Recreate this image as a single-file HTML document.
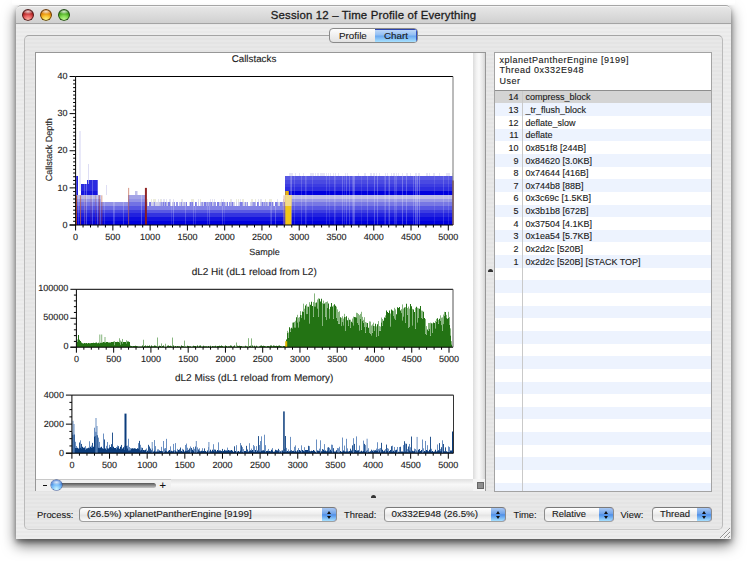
<!DOCTYPE html>
<html><head><meta charset="utf-8">
<style>
html,body{margin:0;padding:0;}
body{width:747px;height:564px;overflow:hidden;background:#fff;position:relative;font-family:"Liberation Sans", sans-serif;color:#1a1a1a;-webkit-text-stroke:0.12px currentColor;}
svg text{stroke:#222;stroke-width:0.12px;}
.abs{position:absolute;}
#win{left:16px;top:5px;width:715px;height:534px;background:repeating-linear-gradient(#ededed 0 2px,#e9e9e9 2px 4px);border-radius:5px 5px 0 0;box-shadow:0 6px 14px rgba(0,0,0,0.58),0 3px 5px rgba(0,0,0,0.35);overflow:hidden;}
#tb{left:0;top:0;width:715px;height:17px;background:linear-gradient(#e8e8e8,#d0d0d0);border-top:1px solid #a6a6a6;border-bottom:1px solid #a4a4a4;box-shadow:inset 0 1px 0 #f4f4f4;border-radius:5px 5px 0 0;}
.light{width:12px;height:12px;border-radius:50%;top:4px;}
#title{left:0;width:715px;top:4px;text-align:center;font-size:11.4px;letter-spacing:0.17px;color:#1c1c1c;white-space:nowrap;-webkit-text-stroke:0.3px #1c1c1c;}
#grp{left:8px;top:30px;width:697px;height:493px;border:1px solid #bababa;border-top-color:#a4a4a4;border-bottom-color:#cacaca;border-radius:5px;background:repeating-linear-gradient(#e8e8e8 0 2px,#e4e4e4 2px 4px);}
#seg{left:313px;top:23px;width:87px;height:13px;border:1px solid #8a8a8a;border-radius:4px;background:linear-gradient(#fdfdfd,#e2e2e2);overflow:hidden;}
#seg .on{position:absolute;left:45px;top:0;width:42px;height:13px;background:linear-gradient(#c6dbf8,#93c0f4 45%,#6ca9f0 55%,#a8e2ff);box-shadow:inset 0 1px 0 #2c44b0,inset -1px 0 0 #3050c0;}
#seg span{position:absolute;top:0px;font-size:9.8px;line-height:13px;}
#lp{left:19px;top:47px;width:450px;height:438px;border:1px solid #979797;background:#fff;}
#rp{left:478px;top:47px;width:216px;height:438px;border:1px solid #979797;background:#fff;overflow:hidden;}
.row{position:absolute;left:0;width:216px;}
.rt{position:absolute;font-size:9px;line-height:12.6px;white-space:nowrap;color:#1a1a1a;}
.num{left:0;width:23.5px;text-align:right;}
.nm{left:30.5px;}
.lbl{position:absolute;font-size:9.4px;top:507.5px;line-height:14px;white-space:nowrap;color:#1a1a1a;}
.pop{position:absolute;top:507px;height:15px;box-sizing:border-box;border:1px solid #8c8c8c;border-top-color:#7a7a7a;border-bottom-color:#a0a0a0;border-radius:4px;background:linear-gradient(#ffffff,#eeeeee 45%,#e4e4e4 55%,#fafafa);overflow:hidden;}
.pop .t{position:absolute;left:7px;top:-1px;font-size:9.9px;line-height:13px;white-space:nowrap;}
.pop .cap{position:absolute;right:-1px;top:-1px;width:15px;height:15px;box-sizing:border-box;border:1px solid #2a3aa8;border-left:none;border-radius:0 4px 4px 0;background:linear-gradient(#a9c8f2,#6fa3ea 45%,#4d8ee8 52%,#a6e0ff);}
.pop .cap:before{content:"";position:absolute;left:4.5px;top:2.5px;border-left:2.2px solid transparent;border-right:2.2px solid transparent;border-bottom:3px solid #111;}
.pop .cap:after{content:"";position:absolute;left:4.5px;top:7.5px;border-left:2.2px solid transparent;border-right:2.2px solid transparent;border-top:3px solid #111;}
</style></head><body>
<div id="win" class="abs">
  <div id="tb" class="abs"></div>
  <div id="grp" class="abs"></div>
</div>
<div class="abs" style="left:12px;top:0;width:723px;height:5px;background:linear-gradient(#fff 50%,#fafafa)"></div>
<div class="abs light" style="left:22px;top:9px;box-shadow:inset 0 0 0 1px rgba(50,25,25,0.85);background:radial-gradient(ellipse 50% 22% at 50% 22%,rgba(255,255,255,0.8),rgba(255,255,255,0) 100%),radial-gradient(circle at 50% 92%,#ffb8a8 0,#e86060 35%,#b02020 60%,#8a1010 80%)"></div>
<div class="abs light" style="left:40px;top:9px;box-shadow:inset 0 0 0 1px rgba(70,45,15,0.85);background:radial-gradient(ellipse 50% 22% at 50% 22%,rgba(255,255,255,0.8),rgba(255,255,255,0) 100%),radial-gradient(circle at 50% 92%,#ffff90 0,#f8c030 35%,#e08000 60%,#c06000 80%)"></div>
<div class="abs light" style="left:58px;top:9px;box-shadow:inset 0 0 0 1px rgba(25,50,20,0.85);background:radial-gradient(ellipse 50% 22% at 50% 22%,rgba(255,255,255,0.8),rgba(255,255,255,0) 100%),radial-gradient(circle at 50% 92%,#c8ff98 0,#80d850 35%,#40a018 60%,#2a7a10 80%)"></div>
<div id="title" class="abs" style="left:16px;top:9px;width:715px">Session 12 – Time Profile of Everything</div>
<div id="seg" class="abs" style="left:329px;top:28px"><div class="on"></div><span style="left:9px">Profile</span><span style="left:54px">Chart</span></div>
<div class="abs" style="left:35px;top:52px;width:451px;height:439px;border:1px solid #979797;background:#fff;box-sizing:border-box"></div>
<svg class="abs" style="left:36px;top:53px" width="437" height="426" viewBox="36 53 437 426" font-family='"Liberation Sans", sans-serif' shape-rendering="crispEdges">
<g text-rendering="geometricPrecision" shape-rendering="auto">
<rect x="76" y="221" width="377" height="4" fill="rgb(0,0,222)"/>
<rect x="76" y="217" width="2" height="4" fill="rgb(12,12,222)"/>
<rect x="78" y="217" width="20" height="4" fill="rgb(13,13,222)"/>
<rect x="98" y="217" width="3" height="4" fill="rgb(12,12,222)"/>
<rect x="101" y="217" width="27" height="4" fill="rgb(16,16,222)"/>
<rect x="128" y="217" width="18" height="4" fill="rgb(13,13,222)"/>
<rect x="146" y="217" width="138" height="4" fill="rgb(20,20,223)"/>
<rect x="284" y="217" width="1" height="4" fill="rgb(14,14,222)"/>
<rect x="285" y="217" width="168" height="4" fill="rgb(13,13,222)"/>
<rect x="76" y="213" width="2" height="4" fill="rgb(30,30,223)"/>
<rect x="78" y="213" width="20" height="4" fill="rgb(34,34,223)"/>
<rect x="98" y="213" width="3" height="4" fill="rgb(32,32,223)"/>
<rect x="101" y="213" width="27" height="4" fill="rgb(42,42,224)"/>
<rect x="128" y="213" width="18" height="4" fill="rgb(33,33,223)"/>
<rect x="146" y="213" width="138" height="4" fill="rgb(51,51,224)"/>
<rect x="284" y="213" width="1" height="4" fill="rgb(36,36,224)"/>
<rect x="285" y="213" width="168" height="4" fill="rgb(34,34,223)"/>
<rect x="76" y="210" width="2" height="3" fill="rgb(53,53,225)"/>
<rect x="78" y="210" width="20" height="3" fill="rgb(58,58,225)"/>
<rect x="98" y="210" width="3" height="3" fill="rgb(56,56,225)"/>
<rect x="101" y="210" width="27" height="3" fill="rgb(73,73,226)"/>
<rect x="128" y="210" width="18" height="3" fill="rgb(57,57,225)"/>
<rect x="146" y="210" width="138" height="3" fill="rgb(88,88,227)"/>
<rect x="284" y="210" width="1" height="3" fill="rgb(63,63,225)"/>
<rect x="285" y="210" width="168" height="3" fill="rgb(60,60,225)"/>
<rect x="76" y="206" width="2" height="4" fill="rgb(78,78,226)"/>
<rect x="78" y="206" width="20" height="4" fill="rgb(86,86,226)"/>
<rect x="98" y="206" width="3" height="4" fill="rgb(83,83,226)"/>
<rect x="101" y="206" width="27" height="4" fill="rgb(108,108,228)"/>
<rect x="128" y="206" width="18" height="4" fill="rgb(85,85,226)"/>
<rect x="146" y="206" width="138" height="4" fill="rgb(130,130,229)"/>
<rect x="284" y="206" width="1" height="4" fill="rgb(93,93,227)"/>
<rect x="285" y="206" width="168" height="4" fill="rgb(88,88,227)"/>
<rect x="76" y="202" width="2" height="4" fill="rgb(106,106,228)"/>
<rect x="78" y="202" width="20" height="4" fill="rgb(117,117,228)"/>
<rect x="98" y="202" width="3" height="4" fill="rgb(113,113,228)"/>
<rect x="101" y="202" width="27" height="4" fill="rgb(147,147,230)"/>
<rect x="128" y="202" width="18" height="4" fill="rgb(114,114,228)"/>
<rect x="146" y="202" width="1" height="4" fill="rgb(151,151,230)"/>
<rect x="147" y="202" width="1" height="4" fill="rgb(210,210,234)"/>
<rect x="149" y="202" width="2" height="4" fill="rgb(126,126,229)"/>
<rect x="151" y="202" width="2" height="4" fill="rgb(210,210,234)"/>
<rect x="153" y="202" width="1" height="4" fill="rgb(199,199,233)"/>
<rect x="154" y="202" width="1" height="4" fill="rgb(151,151,230)"/>
<rect x="155" y="202" width="4" height="4" fill="rgb(210,210,234)"/>
<rect x="159" y="202" width="1" height="4" fill="rgb(199,199,233)"/>
<rect x="160" y="202" width="1" height="4" fill="rgb(178,178,232)"/>
<rect x="161" y="202" width="1" height="4" fill="rgb(151,151,230)"/>
<rect x="162" y="202" width="1" height="4" fill="rgb(178,178,232)"/>
<rect x="163" y="202" width="1" height="4" fill="rgb(126,126,229)"/>
<rect x="164" y="202" width="1" height="4" fill="rgb(178,178,232)"/>
<rect x="165" y="202" width="1" height="4" fill="rgb(126,126,229)"/>
<rect x="166" y="202" width="1" height="4" fill="rgb(178,178,232)"/>
<rect x="167" y="202" width="1" height="4" fill="rgb(210,210,234)"/>
<rect x="168" y="202" width="2" height="4" fill="rgb(126,126,229)"/>
<rect x="170" y="202" width="1" height="4" fill="rgb(199,199,233)"/>
<rect x="172" y="202" width="2" height="4" fill="rgb(199,199,233)"/>
<rect x="174" y="202" width="1" height="4" fill="rgb(151,151,230)"/>
<rect x="176" y="202" width="2" height="4" fill="rgb(151,151,230)"/>
<rect x="179" y="202" width="2" height="4" fill="rgb(199,199,233)"/>
<rect x="181" y="202" width="1" height="4" fill="rgb(151,151,230)"/>
<rect x="182" y="202" width="1" height="4" fill="rgb(210,210,234)"/>
<rect x="183" y="202" width="1" height="4" fill="rgb(199,199,233)"/>
<rect x="184" y="202" width="1" height="4" fill="rgb(178,178,232)"/>
<rect x="185" y="202" width="1" height="4" fill="rgb(210,210,234)"/>
<rect x="186" y="202" width="1" height="4" fill="rgb(126,126,229)"/>
<rect x="189" y="202" width="1" height="4" fill="rgb(210,210,234)"/>
<rect x="190" y="202" width="1" height="4" fill="rgb(126,126,229)"/>
<rect x="191" y="202" width="1" height="4" fill="rgb(151,151,230)"/>
<rect x="192" y="202" width="1" height="4" fill="rgb(126,126,229)"/>
<rect x="193" y="202" width="1" height="4" fill="rgb(210,210,234)"/>
<rect x="195" y="202" width="1" height="4" fill="rgb(126,126,229)"/>
<rect x="196" y="202" width="1" height="4" fill="rgb(151,151,230)"/>
<rect x="198" y="202" width="1" height="4" fill="rgb(199,199,233)"/>
<rect x="200" y="202" width="1" height="4" fill="rgb(199,199,233)"/>
<rect x="201" y="202" width="1" height="4" fill="rgb(178,178,232)"/>
<rect x="202" y="202" width="1" height="4" fill="rgb(151,151,230)"/>
<rect x="203" y="202" width="1" height="4" fill="rgb(210,210,234)"/>
<rect x="204" y="202" width="2" height="4" fill="rgb(126,126,229)"/>
<rect x="206" y="202" width="1" height="4" fill="rgb(178,178,232)"/>
<rect x="207" y="202" width="1" height="4" fill="rgb(151,151,230)"/>
<rect x="208" y="202" width="1" height="4" fill="rgb(178,178,232)"/>
<rect x="209" y="202" width="2" height="4" fill="rgb(151,151,230)"/>
<rect x="211" y="202" width="1" height="4" fill="rgb(126,126,229)"/>
<rect x="212" y="202" width="1" height="4" fill="rgb(199,199,233)"/>
<rect x="213" y="202" width="1" height="4" fill="rgb(178,178,232)"/>
<rect x="214" y="202" width="2" height="4" fill="rgb(151,151,230)"/>
<rect x="217" y="202" width="2" height="4" fill="rgb(126,126,229)"/>
<rect x="219" y="202" width="2" height="4" fill="rgb(199,199,233)"/>
<rect x="221" y="202" width="1" height="4" fill="rgb(178,178,232)"/>
<rect x="222" y="202" width="1" height="4" fill="rgb(126,126,229)"/>
<rect x="223" y="202" width="2" height="4" fill="rgb(151,151,230)"/>
<rect x="225" y="202" width="1" height="4" fill="rgb(199,199,233)"/>
<rect x="226" y="202" width="1" height="4" fill="rgb(210,210,234)"/>
<rect x="227" y="202" width="1" height="4" fill="rgb(126,126,229)"/>
<rect x="229" y="202" width="1" height="4" fill="rgb(151,151,230)"/>
<rect x="230" y="202" width="2" height="4" fill="rgb(178,178,232)"/>
<rect x="232" y="202" width="1" height="4" fill="rgb(126,126,229)"/>
<rect x="233" y="202" width="1" height="4" fill="rgb(199,199,233)"/>
<rect x="234" y="202" width="1" height="4" fill="rgb(210,210,234)"/>
<rect x="236" y="202" width="1" height="4" fill="rgb(210,210,234)"/>
<rect x="238" y="202" width="1" height="4" fill="rgb(210,210,234)"/>
<rect x="239" y="202" width="1" height="4" fill="rgb(199,199,233)"/>
<rect x="240" y="202" width="2" height="4" fill="rgb(126,126,229)"/>
<rect x="242" y="202" width="1" height="4" fill="rgb(151,151,230)"/>
<rect x="243" y="202" width="2" height="4" fill="rgb(210,210,234)"/>
<rect x="245" y="202" width="1" height="4" fill="rgb(151,151,230)"/>
<rect x="246" y="202" width="1" height="4" fill="rgb(210,210,234)"/>
<rect x="247" y="202" width="1" height="4" fill="rgb(151,151,230)"/>
<rect x="250" y="202" width="1" height="4" fill="rgb(210,210,234)"/>
<rect x="251" y="202" width="1" height="4" fill="rgb(199,199,233)"/>
<rect x="252" y="202" width="1" height="4" fill="rgb(178,178,232)"/>
<rect x="253" y="202" width="2" height="4" fill="rgb(151,151,230)"/>
<rect x="255" y="202" width="1" height="4" fill="rgb(178,178,232)"/>
<rect x="257" y="202" width="1" height="4" fill="rgb(126,126,229)"/>
<rect x="258" y="202" width="1" height="4" fill="rgb(151,151,230)"/>
<rect x="260" y="202" width="1" height="4" fill="rgb(199,199,233)"/>
<rect x="261" y="202" width="1" height="4" fill="rgb(178,178,232)"/>
<rect x="262" y="202" width="1" height="4" fill="rgb(126,126,229)"/>
<rect x="263" y="202" width="1" height="4" fill="rgb(178,178,232)"/>
<rect x="264" y="202" width="1" height="4" fill="rgb(151,151,230)"/>
<rect x="265" y="202" width="1" height="4" fill="rgb(178,178,232)"/>
<rect x="266" y="202" width="1" height="4" fill="rgb(151,151,230)"/>
<rect x="267" y="202" width="1" height="4" fill="rgb(178,178,232)"/>
<rect x="268" y="202" width="1" height="4" fill="rgb(210,210,234)"/>
<rect x="269" y="202" width="2" height="4" fill="rgb(126,126,229)"/>
<rect x="271" y="202" width="1" height="4" fill="rgb(178,178,232)"/>
<rect x="272" y="202" width="1" height="4" fill="rgb(126,126,229)"/>
<rect x="273" y="202" width="1" height="4" fill="rgb(210,210,234)"/>
<rect x="275" y="202" width="2" height="4" fill="rgb(126,126,229)"/>
<rect x="277" y="202" width="1" height="4" fill="rgb(151,151,230)"/>
<rect x="278" y="202" width="2" height="4" fill="rgb(210,210,234)"/>
<rect x="280" y="202" width="2" height="4" fill="rgb(126,126,229)"/>
<rect x="282" y="202" width="1" height="4" fill="rgb(151,151,230)"/>
<rect x="283" y="202" width="1" height="4" fill="rgb(199,199,233)"/>
<rect x="284" y="202" width="1" height="4" fill="rgb(126,126,229)"/>
<rect x="285" y="202" width="168" height="4" fill="rgb(120,120,228)"/>
<rect x="76" y="199" width="2" height="3" fill="rgb(136,136,229)"/>
<rect x="78" y="199" width="20" height="3" fill="rgb(150,150,230)"/>
<rect x="98" y="199" width="3" height="3" fill="rgb(144,144,230)"/>
<rect x="128" y="199" width="18" height="3" fill="rgb(147,147,230)"/>
<rect x="147" y="199" width="1" height="3" fill="#ececdc"/>
<rect x="151" y="199" width="1" height="3" fill="#ececdc"/>
<rect x="153" y="199" width="3" height="3" fill="#ececdc"/>
<rect x="158" y="199" width="1" height="3" fill="#e4e4f2"/>
<rect x="160" y="199" width="1" height="3" fill="#ececdc"/>
<rect x="161" y="199" width="1" height="3" fill="#e4e4f2"/>
<rect x="163" y="199" width="2" height="3" fill="#e4e4f2"/>
<rect x="166" y="199" width="1" height="3" fill="#e4e4f2"/>
<rect x="169" y="199" width="2" height="3" fill="#e4e4f2"/>
<rect x="173" y="199" width="1" height="3" fill="#e4e4f2"/>
<rect x="181" y="199" width="1" height="3" fill="#ececdc"/>
<rect x="182" y="199" width="1" height="3" fill="#e4e4f2"/>
<rect x="191" y="199" width="3" height="3" fill="#ececdc"/>
<rect x="198" y="199" width="1" height="3" fill="#e4e4f2"/>
<rect x="200" y="199" width="1" height="3" fill="#ececdc"/>
<rect x="210" y="199" width="1" height="3" fill="#e4e4f2"/>
<rect x="212" y="199" width="1" height="3" fill="#e4e4f2"/>
<rect x="214" y="199" width="1" height="3" fill="#e4e4f2"/>
<rect x="221" y="199" width="1" height="3" fill="#e4e4f2"/>
<rect x="223" y="199" width="1" height="3" fill="#e4e4f2"/>
<rect x="230" y="199" width="1" height="3" fill="#ececdc"/>
<rect x="231" y="199" width="1" height="3" fill="#e4e4f2"/>
<rect x="236" y="199" width="1" height="3" fill="#ececdc"/>
<rect x="238" y="199" width="1" height="3" fill="#ececdc"/>
<rect x="240" y="199" width="1" height="3" fill="#e4e4f2"/>
<rect x="242" y="199" width="2" height="3" fill="#ececdc"/>
<rect x="251" y="199" width="2" height="3" fill="#ececdc"/>
<rect x="255" y="199" width="1" height="3" fill="#ececdc"/>
<rect x="258" y="199" width="1" height="3" fill="#e4e4f2"/>
<rect x="260" y="199" width="2" height="3" fill="#e4e4f2"/>
<rect x="265" y="199" width="1" height="3" fill="#ececdc"/>
<rect x="269" y="199" width="3" height="3" fill="#ececdc"/>
<rect x="277" y="199" width="1" height="3" fill="#e4e4f2"/>
<rect x="283" y="199" width="1" height="3" fill="#e4e4f2"/>
<rect x="285" y="199" width="168" height="3" fill="rgb(153,153,230)"/>
<rect x="76" y="195" width="2" height="4" fill="rgb(168,168,231)"/>
<rect x="78" y="195" width="20" height="4" fill="rgb(184,184,232)"/>
<rect x="98" y="195" width="3" height="4" fill="rgb(178,178,232)"/>
<rect x="128" y="195" width="18" height="4" fill="rgb(163,163,231)"/>
<rect x="285" y="195" width="168" height="4" fill="rgb(189,189,232)"/>
<rect x="76" y="191" width="2" height="4" fill="rgb(31,31,223)"/>
<rect x="81" y="191" width="17" height="4" fill="rgb(21,21,223)"/>
<rect x="285" y="191" width="168" height="4" fill="rgb(0,0,222)"/>
<rect x="76" y="187" width="2" height="4" fill="rgb(31,31,223)"/>
<rect x="81" y="187" width="17" height="4" fill="rgb(42,42,224)"/>
<rect x="285" y="187" width="168" height="4" fill="rgb(46,46,224)"/>
<rect x="76" y="184" width="2" height="3" fill="rgb(31,31,223)"/>
<rect x="81" y="184" width="17" height="3" fill="rgb(42,42,224)"/>
<rect x="285" y="184" width="168" height="3" fill="rgb(60,60,225)"/>
<rect x="76" y="180" width="2" height="4" fill="rgb(31,31,223)"/>
<rect x="87" y="180" width="11" height="4" fill="rgb(42,42,224)"/>
<rect x="285" y="180" width="168" height="4" fill="rgb(74,74,226)"/>
<rect x="76" y="176" width="2" height="4" fill="rgb(31,31,223)"/>
<rect x="285" y="176" width="168" height="4" fill="rgb(88,88,227)"/>
<rect x="289" y="173" width="4" height="3" fill="#e6e6f6"/>
<rect x="295" y="173" width="1" height="3" fill="#e6e6f6"/>
<rect x="299" y="173" width="1" height="3" fill="#e6e6f6"/>
<rect x="303" y="173" width="1" height="3" fill="#e6e6f6"/>
<rect x="310" y="173" width="4" height="3" fill="#e6e6f6"/>
<rect x="315" y="173" width="1" height="3" fill="#e6e6f6"/>
<rect x="317" y="173" width="2" height="3" fill="#e6e6f6"/>
<rect x="320" y="173" width="5" height="3" fill="#e6e6f6"/>
<rect x="326" y="173" width="1" height="3" fill="#e6e6f6"/>
<rect x="328" y="173" width="1" height="3" fill="#e6e6f6"/>
<rect x="330" y="173" width="1" height="3" fill="#e6e6f6"/>
<rect x="333" y="173" width="1" height="3" fill="#e6e6f6"/>
<rect x="335" y="173" width="1" height="3" fill="#e6e6f6"/>
<rect x="338" y="173" width="1" height="3" fill="#e6e6f6"/>
<rect x="345" y="173" width="1" height="3" fill="#e6e6f6"/>
<rect x="347" y="173" width="1" height="3" fill="#e6e6f6"/>
<rect x="358" y="173" width="1" height="3" fill="#e6e6f6"/>
<rect x="364" y="173" width="2" height="3" fill="#e6e6f6"/>
<rect x="370" y="173" width="2" height="3" fill="#e6e6f6"/>
<rect x="373" y="173" width="2" height="3" fill="#e6e6f6"/>
<rect x="376" y="173" width="1" height="3" fill="#e6e6f6"/>
<rect x="379" y="173" width="1" height="3" fill="#e6e6f6"/>
<rect x="385" y="173" width="1" height="3" fill="#e6e6f6"/>
<rect x="387" y="173" width="1" height="3" fill="#e6e6f6"/>
<rect x="391" y="173" width="1" height="3" fill="#e6e6f6"/>
<rect x="393" y="173" width="2" height="3" fill="#e6e6f6"/>
<rect x="396" y="173" width="1" height="3" fill="#e6e6f6"/>
<rect x="398" y="173" width="1" height="3" fill="#e6e6f6"/>
<rect x="402" y="173" width="1" height="3" fill="#e6e6f6"/>
<rect x="406" y="173" width="2" height="3" fill="#e6e6f6"/>
<rect x="410" y="173" width="1" height="3" fill="#e6e6f6"/>
<rect x="415" y="173" width="2" height="3" fill="#e6e6f6"/>
<rect x="418" y="173" width="2" height="3" fill="#e6e6f6"/>
<rect x="426" y="173" width="2" height="3" fill="#e6e6f6"/>
<rect x="429" y="173" width="1" height="3" fill="#e6e6f6"/>
<rect x="433" y="173" width="2" height="3" fill="#e6e6f6"/>
<rect x="439" y="173" width="1" height="3" fill="#e6e6f6"/>
<rect x="446" y="173" width="4" height="3" fill="#e6e6f6"/>
<rect x="452" y="173" width="1" height="3" fill="#e6e6f6"/>
<rect x="76" y="176" width="1" height="49" fill="#ffffff" fill-opacity="0.23"/>
<rect x="78" y="195" width="1" height="30" fill="#ffffff" fill-opacity="0.17"/>
<rect x="80" y="195" width="1" height="30" fill="#ffffff" fill-opacity="0.27"/>
<rect x="84" y="184" width="1" height="41" fill="#ffffff" fill-opacity="0.22"/>
<rect x="86" y="184" width="1" height="41" fill="#ffffff" fill-opacity="0.27"/>
<rect x="92" y="180" width="1" height="45" fill="#ffffff" fill-opacity="0.24"/>
<rect x="97" y="180" width="1" height="45" fill="#ffffff" fill-opacity="0.27"/>
<rect x="100" y="195" width="1" height="30" fill="#ffffff" fill-opacity="0.26"/>
<rect x="104" y="202" width="1" height="23" fill="#ffffff" fill-opacity="0.17"/>
<rect x="113" y="202" width="1" height="23" fill="#ffffff" fill-opacity="0.22"/>
<rect x="114" y="202" width="1" height="23" fill="#ffffff" fill-opacity="0.19"/>
<rect x="123" y="202" width="1" height="23" fill="#ffffff" fill-opacity="0.2"/>
<rect x="128" y="195" width="1" height="30" fill="#ffffff" fill-opacity="0.26"/>
<rect x="141" y="195" width="1" height="30" fill="#ffffff" fill-opacity="0.26"/>
<rect x="171" y="206" width="1" height="19" fill="#ffffff" fill-opacity="0.12"/>
<rect x="173" y="206" width="1" height="19" fill="#ffffff" fill-opacity="0.23"/>
<rect x="185" y="206" width="1" height="19" fill="#ffffff" fill-opacity="0.2"/>
<rect x="193" y="206" width="1" height="19" fill="#ffffff" fill-opacity="0.17"/>
<rect x="195" y="206" width="1" height="19" fill="#ffffff" fill-opacity="0.13"/>
<rect x="207" y="206" width="1" height="19" fill="#ffffff" fill-opacity="0.15"/>
<rect x="209" y="206" width="1" height="19" fill="#ffffff" fill-opacity="0.19"/>
<rect x="222" y="206" width="1" height="19" fill="#ffffff" fill-opacity="0.21"/>
<rect x="224" y="206" width="1" height="19" fill="#ffffff" fill-opacity="0.1"/>
<rect x="270" y="206" width="1" height="19" fill="#ffffff" fill-opacity="0.14"/>
<rect x="271" y="206" width="1" height="19" fill="#ffffff" fill-opacity="0.21"/>
<rect x="275" y="206" width="1" height="19" fill="#ffffff" fill-opacity="0.23"/>
<rect x="283" y="206" width="1" height="19" fill="#ffffff" fill-opacity="0.25"/>
<rect x="284" y="202" width="1" height="23" fill="#ffffff" fill-opacity="0.23"/>
<rect x="290" y="176" width="1" height="49" fill="#ffffff" fill-opacity="0.19"/>
<rect x="291" y="176" width="1" height="49" fill="#ffffff" fill-opacity="0.27"/>
<rect x="294" y="176" width="1" height="49" fill="#ffffff" fill-opacity="0.14"/>
<rect x="301" y="176" width="1" height="49" fill="#ffffff" fill-opacity="0.17"/>
<rect x="305" y="176" width="1" height="49" fill="#ffffff" fill-opacity="0.18"/>
<rect x="306" y="176" width="1" height="49" fill="#ffffff" fill-opacity="0.11"/>
<rect x="312" y="176" width="1" height="49" fill="#ffffff" fill-opacity="0.12"/>
<rect x="326" y="176" width="1" height="49" fill="#ffffff" fill-opacity="0.14"/>
<rect x="329" y="176" width="1" height="49" fill="#ffffff" fill-opacity="0.11"/>
<rect x="334" y="176" width="1" height="49" fill="#ffffff" fill-opacity="0.18"/>
<rect x="335" y="176" width="1" height="49" fill="#ffffff" fill-opacity="0.1"/>
<rect x="342" y="176" width="1" height="49" fill="#ffffff" fill-opacity="0.21"/>
<rect x="344" y="176" width="1" height="49" fill="#ffffff" fill-opacity="0.11"/>
<rect x="346" y="176" width="1" height="49" fill="#ffffff" fill-opacity="0.21"/>
<rect x="349" y="176" width="1" height="49" fill="#ffffff" fill-opacity="0.21"/>
<rect x="352" y="176" width="1" height="49" fill="#ffffff" fill-opacity="0.16"/>
<rect x="353" y="176" width="1" height="49" fill="#ffffff" fill-opacity="0.28"/>
<rect x="354" y="176" width="1" height="49" fill="#ffffff" fill-opacity="0.23"/>
<rect x="361" y="176" width="1" height="49" fill="#ffffff" fill-opacity="0.11"/>
<rect x="367" y="176" width="1" height="49" fill="#ffffff" fill-opacity="0.2"/>
<rect x="374" y="176" width="1" height="49" fill="#ffffff" fill-opacity="0.23"/>
<rect x="377" y="176" width="1" height="49" fill="#ffffff" fill-opacity="0.24"/>
<rect x="384" y="176" width="1" height="49" fill="#ffffff" fill-opacity="0.12"/>
<rect x="385" y="176" width="1" height="49" fill="#ffffff" fill-opacity="0.2"/>
<rect x="388" y="176" width="1" height="49" fill="#ffffff" fill-opacity="0.11"/>
<rect x="389" y="176" width="1" height="49" fill="#ffffff" fill-opacity="0.25"/>
<rect x="394" y="176" width="1" height="49" fill="#ffffff" fill-opacity="0.16"/>
<rect x="395" y="176" width="1" height="49" fill="#ffffff" fill-opacity="0.13"/>
<rect x="396" y="176" width="1" height="49" fill="#ffffff" fill-opacity="0.17"/>
<rect x="402" y="176" width="1" height="49" fill="#ffffff" fill-opacity="0.26"/>
<rect x="406" y="176" width="1" height="49" fill="#ffffff" fill-opacity="0.23"/>
<rect x="413" y="176" width="1" height="49" fill="#ffffff" fill-opacity="0.19"/>
<rect x="415" y="176" width="1" height="49" fill="#ffffff" fill-opacity="0.27"/>
<rect x="416" y="176" width="1" height="49" fill="#ffffff" fill-opacity="0.16"/>
<rect x="417" y="176" width="1" height="49" fill="#ffffff" fill-opacity="0.27"/>
<rect x="419" y="176" width="1" height="49" fill="#ffffff" fill-opacity="0.26"/>
<rect x="434" y="176" width="1" height="49" fill="#ffffff" fill-opacity="0.1"/>
<rect x="443" y="176" width="1" height="49" fill="#ffffff" fill-opacity="0.16"/>
<rect x="448" y="176" width="1" height="49" fill="#ffffff" fill-opacity="0.12"/>
<rect x="452" y="176" width="1" height="49" fill="#ffffff" fill-opacity="0.24"/>
<rect x="79.5" y="131" width="1" height="60" fill="#c8c8f0" fill-opacity="0.8"/>
<rect x="135" y="191" width="2.5" height="4" fill="#c0c0ea"/>
<rect x="88" y="164" width="1" height="20" fill="#d0d0f0" fill-opacity="0.7"/>
<rect x="106" y="185" width="1" height="10" fill="#d0d0f0" fill-opacity="0.7"/>
<rect x="285.21" y="195" width="6.19" height="30" fill="#f2c518"/>
<rect x="285.21" y="195" width="6.19" height="11" fill="#f3dd98" fill-opacity="0.9"/>
<rect x="285.21" y="191" width="3.58" height="4" fill="#e8b010"/>
<rect x="75.97" y="195.3" width="1" height="29.7" fill="#b04020" fill-opacity="0.9"/>
<rect x="80.07" y="195.3" width="1" height="29.7" fill="#b04020" fill-opacity="0.6"/>
<rect x="84.54" y="195.3" width="1" height="29.7" fill="#b04020" fill-opacity="0.25"/>
<rect x="90.51" y="195.3" width="1" height="29.7" fill="#b04020" fill-opacity="0.25"/>
<rect x="94.98" y="195.3" width="1" height="29.7" fill="#b04020" fill-opacity="0.2"/>
<rect x="98.71" y="195.3" width="1" height="29.7" fill="#b04020" fill-opacity="0.6"/>
<rect x="101.32" y="195.3" width="1" height="29.7" fill="#b04020" fill-opacity="0.5"/>
<rect x="128.15" y="187.88" width="1" height="37.12" fill="#b04020" fill-opacity="0.55"/>
<rect x="283.57" y="195.3" width="1" height="29.7" fill="#b04020" fill-opacity="0.45"/>
<rect x="144.92" y="187.88" width="2" height="37.12" fill="#8b1a1a" fill-opacity="0.95"/>
<rect x="452.4" y="180.45" width="1.3" height="44.55" fill="#6a1010" fill-opacity="0.9"/>
<line x1="75.6" y1="76.5" x2="453" y2="76.5" stroke="#000" stroke-width="1"/>
<line x1="75.6" y1="76.5" x2="75.6" y2="225" stroke="#000" stroke-width="1"/>
<line x1="453" y1="76.5" x2="453" y2="225" stroke="#777" stroke-width="1"/>
<line x1="69.6" y1="225" x2="453" y2="225" stroke="#000" stroke-width="1"/>
<line x1="69.6" y1="225" x2="75.6" y2="225" stroke="#000" stroke-width="1"/>
<text x="67.6" y="227.7" font-size="9" text-anchor="end" fill="#222">0</text>
<line x1="73.1" y1="221.29" x2="75.6" y2="221.29" stroke="#000" stroke-width="1"/>
<line x1="73.1" y1="217.57" x2="75.6" y2="217.57" stroke="#000" stroke-width="1"/>
<line x1="73.1" y1="213.86" x2="75.6" y2="213.86" stroke="#000" stroke-width="1"/>
<line x1="73.1" y1="210.15" x2="75.6" y2="210.15" stroke="#000" stroke-width="1"/>
<line x1="73.1" y1="206.44" x2="75.6" y2="206.44" stroke="#000" stroke-width="1"/>
<line x1="73.1" y1="202.72" x2="75.6" y2="202.72" stroke="#000" stroke-width="1"/>
<line x1="73.1" y1="199.01" x2="75.6" y2="199.01" stroke="#000" stroke-width="1"/>
<line x1="73.1" y1="195.3" x2="75.6" y2="195.3" stroke="#000" stroke-width="1"/>
<line x1="73.1" y1="191.59" x2="75.6" y2="191.59" stroke="#000" stroke-width="1"/>
<line x1="69.6" y1="187.88" x2="75.6" y2="187.88" stroke="#000" stroke-width="1"/>
<text x="67.6" y="190.57" font-size="9" text-anchor="end" fill="#222">10</text>
<line x1="73.1" y1="184.16" x2="75.6" y2="184.16" stroke="#000" stroke-width="1"/>
<line x1="73.1" y1="180.45" x2="75.6" y2="180.45" stroke="#000" stroke-width="1"/>
<line x1="73.1" y1="176.74" x2="75.6" y2="176.74" stroke="#000" stroke-width="1"/>
<line x1="73.1" y1="173.03" x2="75.6" y2="173.03" stroke="#000" stroke-width="1"/>
<line x1="73.1" y1="169.31" x2="75.6" y2="169.31" stroke="#000" stroke-width="1"/>
<line x1="73.1" y1="165.6" x2="75.6" y2="165.6" stroke="#000" stroke-width="1"/>
<line x1="73.1" y1="161.89" x2="75.6" y2="161.89" stroke="#000" stroke-width="1"/>
<line x1="73.1" y1="158.18" x2="75.6" y2="158.18" stroke="#000" stroke-width="1"/>
<line x1="73.1" y1="154.46" x2="75.6" y2="154.46" stroke="#000" stroke-width="1"/>
<line x1="69.6" y1="150.75" x2="75.6" y2="150.75" stroke="#000" stroke-width="1"/>
<text x="67.6" y="153.45" font-size="9" text-anchor="end" fill="#222">20</text>
<line x1="73.1" y1="147.04" x2="75.6" y2="147.04" stroke="#000" stroke-width="1"/>
<line x1="73.1" y1="143.32" x2="75.6" y2="143.32" stroke="#000" stroke-width="1"/>
<line x1="73.1" y1="139.61" x2="75.6" y2="139.61" stroke="#000" stroke-width="1"/>
<line x1="73.1" y1="135.9" x2="75.6" y2="135.9" stroke="#000" stroke-width="1"/>
<line x1="73.1" y1="132.19" x2="75.6" y2="132.19" stroke="#000" stroke-width="1"/>
<line x1="73.1" y1="128.48" x2="75.6" y2="128.48" stroke="#000" stroke-width="1"/>
<line x1="73.1" y1="124.76" x2="75.6" y2="124.76" stroke="#000" stroke-width="1"/>
<line x1="73.1" y1="121.05" x2="75.6" y2="121.05" stroke="#000" stroke-width="1"/>
<line x1="73.1" y1="117.34" x2="75.6" y2="117.34" stroke="#000" stroke-width="1"/>
<line x1="69.6" y1="113.62" x2="75.6" y2="113.62" stroke="#000" stroke-width="1"/>
<text x="67.6" y="116.33" font-size="9" text-anchor="end" fill="#222">30</text>
<line x1="73.1" y1="109.91" x2="75.6" y2="109.91" stroke="#000" stroke-width="1"/>
<line x1="73.1" y1="106.2" x2="75.6" y2="106.2" stroke="#000" stroke-width="1"/>
<line x1="73.1" y1="102.49" x2="75.6" y2="102.49" stroke="#000" stroke-width="1"/>
<line x1="73.1" y1="98.78" x2="75.6" y2="98.78" stroke="#000" stroke-width="1"/>
<line x1="73.1" y1="95.06" x2="75.6" y2="95.06" stroke="#000" stroke-width="1"/>
<line x1="73.1" y1="91.35" x2="75.6" y2="91.35" stroke="#000" stroke-width="1"/>
<line x1="73.1" y1="87.64" x2="75.6" y2="87.64" stroke="#000" stroke-width="1"/>
<line x1="73.1" y1="83.93" x2="75.6" y2="83.93" stroke="#000" stroke-width="1"/>
<line x1="73.1" y1="80.21" x2="75.6" y2="80.21" stroke="#000" stroke-width="1"/>
<line x1="69.6" y1="76.5" x2="75.6" y2="76.5" stroke="#000" stroke-width="1"/>
<text x="67.6" y="79.2" font-size="9" text-anchor="end" fill="#222">40</text>
<line x1="75.6" y1="225" x2="75.6" y2="230.5" stroke="#000" stroke-width="1"/>
<text x="75.6" y="239.5" font-size="9" text-anchor="middle" fill="#222">0</text>
<line x1="83.05" y1="225" x2="83.05" y2="227.5" stroke="#000" stroke-width="1"/>
<line x1="90.51" y1="225" x2="90.51" y2="227.5" stroke="#000" stroke-width="1"/>
<line x1="97.96" y1="225" x2="97.96" y2="227.5" stroke="#000" stroke-width="1"/>
<line x1="105.42" y1="225" x2="105.42" y2="227.5" stroke="#000" stroke-width="1"/>
<line x1="112.87" y1="225" x2="112.87" y2="230.5" stroke="#000" stroke-width="1"/>
<text x="112.87" y="239.5" font-size="9" text-anchor="middle" fill="#222">500</text>
<line x1="120.32" y1="225" x2="120.32" y2="227.5" stroke="#000" stroke-width="1"/>
<line x1="127.78" y1="225" x2="127.78" y2="227.5" stroke="#000" stroke-width="1"/>
<line x1="135.23" y1="225" x2="135.23" y2="227.5" stroke="#000" stroke-width="1"/>
<line x1="142.69" y1="225" x2="142.69" y2="227.5" stroke="#000" stroke-width="1"/>
<line x1="150.14" y1="225" x2="150.14" y2="230.5" stroke="#000" stroke-width="1"/>
<text x="150.14" y="239.5" font-size="9" text-anchor="middle" fill="#222">1000</text>
<line x1="157.59" y1="225" x2="157.59" y2="227.5" stroke="#000" stroke-width="1"/>
<line x1="165.05" y1="225" x2="165.05" y2="227.5" stroke="#000" stroke-width="1"/>
<line x1="172.5" y1="225" x2="172.5" y2="227.5" stroke="#000" stroke-width="1"/>
<line x1="179.96" y1="225" x2="179.96" y2="227.5" stroke="#000" stroke-width="1"/>
<line x1="187.41" y1="225" x2="187.41" y2="230.5" stroke="#000" stroke-width="1"/>
<text x="187.41" y="239.5" font-size="9" text-anchor="middle" fill="#222">1500</text>
<line x1="194.86" y1="225" x2="194.86" y2="227.5" stroke="#000" stroke-width="1"/>
<line x1="202.32" y1="225" x2="202.32" y2="227.5" stroke="#000" stroke-width="1"/>
<line x1="209.77" y1="225" x2="209.77" y2="227.5" stroke="#000" stroke-width="1"/>
<line x1="217.23" y1="225" x2="217.23" y2="227.5" stroke="#000" stroke-width="1"/>
<line x1="224.68" y1="225" x2="224.68" y2="230.5" stroke="#000" stroke-width="1"/>
<text x="224.68" y="239.5" font-size="9" text-anchor="middle" fill="#222">2000</text>
<line x1="232.13" y1="225" x2="232.13" y2="227.5" stroke="#000" stroke-width="1"/>
<line x1="239.59" y1="225" x2="239.59" y2="227.5" stroke="#000" stroke-width="1"/>
<line x1="247.04" y1="225" x2="247.04" y2="227.5" stroke="#000" stroke-width="1"/>
<line x1="254.5" y1="225" x2="254.5" y2="227.5" stroke="#000" stroke-width="1"/>
<line x1="261.95" y1="225" x2="261.95" y2="230.5" stroke="#000" stroke-width="1"/>
<text x="261.95" y="239.5" font-size="9" text-anchor="middle" fill="#222">2500</text>
<line x1="269.4" y1="225" x2="269.4" y2="227.5" stroke="#000" stroke-width="1"/>
<line x1="276.86" y1="225" x2="276.86" y2="227.5" stroke="#000" stroke-width="1"/>
<line x1="284.31" y1="225" x2="284.31" y2="227.5" stroke="#000" stroke-width="1"/>
<line x1="291.77" y1="225" x2="291.77" y2="227.5" stroke="#000" stroke-width="1"/>
<line x1="299.22" y1="225" x2="299.22" y2="230.5" stroke="#000" stroke-width="1"/>
<text x="299.22" y="239.5" font-size="9" text-anchor="middle" fill="#222">3000</text>
<line x1="306.67" y1="225" x2="306.67" y2="227.5" stroke="#000" stroke-width="1"/>
<line x1="314.13" y1="225" x2="314.13" y2="227.5" stroke="#000" stroke-width="1"/>
<line x1="321.58" y1="225" x2="321.58" y2="227.5" stroke="#000" stroke-width="1"/>
<line x1="329.04" y1="225" x2="329.04" y2="227.5" stroke="#000" stroke-width="1"/>
<line x1="336.49" y1="225" x2="336.49" y2="230.5" stroke="#000" stroke-width="1"/>
<text x="336.49" y="239.5" font-size="9" text-anchor="middle" fill="#222">3500</text>
<line x1="343.94" y1="225" x2="343.94" y2="227.5" stroke="#000" stroke-width="1"/>
<line x1="351.4" y1="225" x2="351.4" y2="227.5" stroke="#000" stroke-width="1"/>
<line x1="358.85" y1="225" x2="358.85" y2="227.5" stroke="#000" stroke-width="1"/>
<line x1="366.31" y1="225" x2="366.31" y2="227.5" stroke="#000" stroke-width="1"/>
<line x1="373.76" y1="225" x2="373.76" y2="230.5" stroke="#000" stroke-width="1"/>
<text x="373.76" y="239.5" font-size="9" text-anchor="middle" fill="#222">4000</text>
<line x1="381.21" y1="225" x2="381.21" y2="227.5" stroke="#000" stroke-width="1"/>
<line x1="388.67" y1="225" x2="388.67" y2="227.5" stroke="#000" stroke-width="1"/>
<line x1="396.12" y1="225" x2="396.12" y2="227.5" stroke="#000" stroke-width="1"/>
<line x1="403.58" y1="225" x2="403.58" y2="227.5" stroke="#000" stroke-width="1"/>
<line x1="411.03" y1="225" x2="411.03" y2="230.5" stroke="#000" stroke-width="1"/>
<text x="411.03" y="239.5" font-size="9" text-anchor="middle" fill="#222">4500</text>
<line x1="418.48" y1="225" x2="418.48" y2="227.5" stroke="#000" stroke-width="1"/>
<line x1="425.94" y1="225" x2="425.94" y2="227.5" stroke="#000" stroke-width="1"/>
<line x1="433.39" y1="225" x2="433.39" y2="227.5" stroke="#000" stroke-width="1"/>
<line x1="440.85" y1="225" x2="440.85" y2="227.5" stroke="#000" stroke-width="1"/>
<line x1="448.3" y1="225" x2="448.3" y2="230.5" stroke="#000" stroke-width="1"/>
<text x="448.3" y="239.5" font-size="9" text-anchor="middle" fill="#222">5000</text>
<text x="264.5" y="254.5" font-size="9" text-anchor="middle" fill="#222">Sample</text>
<text x="52.5" y="149.8" font-size="9" text-anchor="middle" fill="#222" transform="rotate(-90 52.5 149.8)">Callstack Depth</text>
<text x="254" y="62" font-size="9.8" text-anchor="middle" fill="#222">Callstacks</text>
<path d="M77 347.2V341.43h1V335.11h1V339.86h1V340.99h1V342.54h1V343.23h1V343.47h1V342.99h1V343.35h1V343.04h1V343.6h1V342.93h1V343.13h1V343.24h1V342.98h1V342.98h1V342.84h1V342.91h1V342.78h1V342.51h1V343.36h1V342.85h1V343.15h1V342.72h1V342.85h1V342.42h1V342.12h1V341.99h1V342.45h1V342.09h1V342.08h1V342.62h1V342.62h1V342.45h1V341.98h1V342.08h1V341.69h1V342.24h1V341.91h1V342.12h1V341.86h1V341.91h1V341.68h1V341.95h1V341.75h1V342.42h1V342.03h1V342.02h1V341.89h1V341.37h1V341.51h1V341.44h1V341.97h1V345.63h1V345.93h1V346.2h1V346.09h1V345.95h1V345.83h1V346.05h1V346.18h1V346.6h1V346.49h1V346.39h1V346.55h1V345.59h1V346.38h1V345.88h1V345.6h1V346.35h1V345.63h1V346.09h1V345.61h1V346.46h1V345.6h1V346.23h1V346.24h1V345.59h1V345.69h1V346.13h1V346.69h1V346.42h1V345.75h1V346h1V346.49h1V345.95h1V345.53h1V346.66h1V345.93h1V346.64h1V345.79h1V345.55h1V345.9h1V345.79h1V346.24h1V346.46h1V345.61h1V346.6h1V345.94h1V346.54h1V345.92h1V346.3h1V346.28h1V346.64h1V345.61h1V345.98h1V346.35h1V345.75h1V346.58h1V346.64h1V345.84h1V346.01h1V346.18h1V346.35h1V346.64h1V346.59h1V345.71h1V345.99h1V346.08h1V346.51h1V345.57h1V346.5h1V345.78h1V345.51h1V346.57h1V346.59h1V345.63h1V346.19h1V346.25h1V346.19h1V346.49h1V345.94h1V346.55h1V345.87h1V346.66h1V346.07h1V346.16h1V346.31h1V345.87h1V346.42h1V345.93h1V346.09h1V345.79h1V345.96h1V345.53h1V345.98h1V346.42h1V346.39h1V345.51h1V345.91h1V346.52h1V346.34h1V346.37h1V345.61h1V345.64h1V346.68h1V346.18h1V345.52h1V346.67h1V345.81h1V345.68h1V346h1V345.68h1V345.92h1V345.93h1V346.43h1V346.55h1V346.39h1V345.63h1V346.22h1V346.51h1V346.12h1V346.08h1V345.65h1V346.31h1V345.61h1V346.4h1V345.84h1V346.46h1V345.68h1V346.45h1V346.68h1V346.26h1V345.81h1V345.51h1V346.08h1V345.83h1V345.93h1V346.24h1V346.61h1V345.95h1V346h1V346.34h1V345.56h1V345.51h1V346.15h1V345.58h1V345.74h1V345.93h1V345.72h1V345.9h1V345.75h1V345.5h1V345.92h1V346.14h1V346.42h1V345.88h1V345.89h1V345.73h1V339.61h1V333.07h1V337.47h1V327.22h1V331.73h1V327.76h1V328.16h1V322.57h1V327.13h1V327.36h1V317.28h1V322.13h1V327.22h1V321.2h1V315.01h1V318.05h1V311.52h1V311.82h1V319.35h1V305.59h1V314.09h1V313.61h1V306.82h1V323.3h1V304.84h1V301.68h1V306.03h1V316.68h1V306.13h1V306.24h1V302.56h1V308.35h1V316.47h1V298.66h1V301.41h1V298.71h1V326h1V304.03h1V303.42h1V316.78h1V320.04h1V308.09h1V303.45h1V318.31h1V306.63h1V302.89h1V306.42h1V318.73h1V304.26h1V305.87h1V317.54h1V320.84h1V323.76h1V323.65h1V317.18h1V326.07h1V322.08h1V325.18h1V316.39h1V331.03h1V316.25h1V320.35h1V325.89h1V319.83h1V327.91h1V321.78h1V322.37h1V325.24h1V317.04h1V317.22h1V317.18h1V322.38h1V324.41h1V330.28h1V318.97h1V329.8h1V321.1h1V322.85h1V327.09h1V332.63h1V327.06h1V323.05h1V327.73h1V332.99h1V333.92h1V335.19h1V332.65h1V325.9h1V331.05h1V323.86h1V336.62h1V324.28h1V335.4h1V330.48h1V330.64h1V322.19h1V325.66h1V320.84h1V317.57h1V317.45h1V310.51h1V311.92h1V313.05h1V310.46h1V326.34h1V309.55h1V310.61h1V316.06h1V318.24h1V319.45h1V314.16h1V307.28h1V308.08h1V306.93h1V310.49h1V313.12h1V320.25h1V316.37h1V307.58h1V322.87h1V303.68h1V314.79h1V327.86h1V327.01h1V304.07h1V306.24h1V325.21h1V309.48h1V312.11h1V328.89h1V306.76h1V322.17h1V317.46h1V308.84h1V306.03h1V317.84h1V318.59h1V311.83h1V317.92h1V333.91h1V334.88h1V329.41h1V330.71h1V329.09h1V335.68h1V323.28h1V332.44h1V322.49h1V322.88h1V328.14h1V321.83h1V318.13h1V323.75h1V318.79h1V321h1V325.09h1V330.49h1V324.12h1V316.09h1V311.94h1V318.1h1V318.63h1V317.63h1V324.58h1V335.36h1V343.36h1V346.68h1V347.2Z" fill="#237314"/>
<rect x="77" y="339.42" width="1" height="2.01" fill="#86b57e"/>
<rect x="114" y="341.07" width="1" height="4.13" fill="#86b57e"/>
<rect x="119" y="338.27" width="1" height="4.41" fill="#86b57e"/>
<rect x="120" y="340.51" width="1" height="4.33" fill="#86b57e"/>
<rect x="122" y="338.96" width="1" height="4.79" fill="#86b57e"/>
<rect x="126" y="340.3" width="1" height="3.37" fill="#86b57e"/>
<rect x="143" y="339.75" width="1" height="7.45" fill="#86b57e"/>
<rect x="157" y="337.51" width="1" height="9.69" fill="#86b57e"/>
<rect x="161" y="343.42" width="1" height="3.78" fill="#86b57e"/>
<rect x="165" y="343.73" width="1" height="3.47" fill="#86b57e"/>
<rect x="172" y="337.56" width="1" height="9.64" fill="#86b57e"/>
<rect x="184" y="340.57" width="1" height="6.63" fill="#86b57e"/>
<rect x="236" y="342.5" width="1" height="4.7" fill="#86b57e"/>
<rect x="248" y="338.19" width="1" height="9.01" fill="#86b57e"/>
<rect x="251" y="338.38" width="1" height="8.82" fill="#86b57e"/>
<rect x="287" y="330.82" width="1" height="2.25" fill="#86b57e"/>
<rect x="288" y="332.5" width="1" height="4.97" fill="#86b57e"/>
<rect x="290" y="328.57" width="1" height="3.17" fill="#86b57e"/>
<rect x="292" y="322.63" width="1" height="5.53" fill="#86b57e"/>
<rect x="294" y="321.9" width="1" height="5.23" fill="#86b57e"/>
<rect x="295" y="320.69" width="1" height="6.67" fill="#86b57e"/>
<rect x="297" y="314.82" width="1" height="7.31" fill="#86b57e"/>
<rect x="298" y="317.71" width="1" height="9.51" fill="#86b57e"/>
<rect x="299" y="317.11" width="1" height="4.09" fill="#86b57e"/>
<rect x="300" y="311.13" width="1" height="3.88" fill="#86b57e"/>
<rect x="301" y="315.16" width="1" height="2.89" fill="#86b57e"/>
<rect x="303" y="303.66" width="1" height="8.16" fill="#86b57e"/>
<rect x="304" y="308.7" width="1" height="10.65" fill="#86b57e"/>
<rect x="306" y="304.06" width="1" height="10.04" fill="#86b57e"/>
<rect x="307" y="306.53" width="1" height="7.08" fill="#86b57e"/>
<rect x="309" y="302.2" width="1" height="21.11" fill="#86b57e"/>
<rect x="313" y="302.08" width="1" height="14.6" fill="#86b57e"/>
<rect x="314" y="293.43" width="1" height="12.7" fill="#86b57e"/>
<rect x="315" y="302.8" width="1" height="3.44" fill="#86b57e"/>
<rect x="317" y="299.53" width="1" height="8.82" fill="#86b57e"/>
<rect x="318" y="298.34" width="1" height="18.13" fill="#86b57e"/>
<rect x="322" y="303.19" width="1" height="22.81" fill="#86b57e"/>
<rect x="323" y="300.62" width="1" height="3.41" fill="#86b57e"/>
<rect x="325" y="302.34" width="1" height="14.44" fill="#86b57e"/>
<rect x="326" y="301.96" width="1" height="18.08" fill="#86b57e"/>
<rect x="327" y="301.42" width="1" height="6.68" fill="#86b57e"/>
<rect x="329" y="309.08" width="1" height="9.23" fill="#86b57e"/>
<rect x="333" y="305.28" width="1" height="13.45" fill="#86b57e"/>
<rect x="336" y="306.72" width="1" height="10.82" fill="#86b57e"/>
<rect x="337" y="309.36" width="1" height="11.48" fill="#86b57e"/>
<rect x="338" y="311.97" width="1" height="11.79" fill="#86b57e"/>
<rect x="339" y="311.18" width="1" height="12.47" fill="#86b57e"/>
<rect x="341" y="317.85" width="1" height="8.22" fill="#86b57e"/>
<rect x="342" y="316.29" width="1" height="5.8" fill="#86b57e"/>
<rect x="343" y="318.6" width="1" height="6.58" fill="#86b57e"/>
<rect x="344" y="313.85" width="1" height="2.54" fill="#86b57e"/>
<rect x="345" y="316.98" width="1" height="14.05" fill="#86b57e"/>
<rect x="348" y="317.78" width="1" height="8.11" fill="#86b57e"/>
<rect x="350" y="319.76" width="1" height="8.15" fill="#86b57e"/>
<rect x="352" y="318.55" width="1" height="3.82" fill="#86b57e"/>
<rect x="353" y="316.62" width="1" height="8.62" fill="#86b57e"/>
<rect x="356" y="312.73" width="1" height="4.44" fill="#86b57e"/>
<rect x="357" y="313.03" width="1" height="9.34" fill="#86b57e"/>
<rect x="358" y="314.01" width="1" height="10.39" fill="#86b57e"/>
<rect x="359" y="315.18" width="1" height="15.1" fill="#86b57e"/>
<rect x="360" y="313.86" width="1" height="5.11" fill="#86b57e"/>
<rect x="361" y="311.79" width="1" height="18.02" fill="#86b57e"/>
<rect x="362" y="316.85" width="1" height="4.25" fill="#86b57e"/>
<rect x="363" y="319.82" width="1" height="3.03" fill="#86b57e"/>
<rect x="364" y="317.22" width="1" height="9.87" fill="#86b57e"/>
<rect x="365" y="322.12" width="1" height="10.51" fill="#86b57e"/>
<rect x="366" y="322.63" width="1" height="4.43" fill="#86b57e"/>
<rect x="369" y="321.36" width="1" height="11.63" fill="#86b57e"/>
<rect x="370" y="321.6" width="1" height="12.33" fill="#86b57e"/>
<rect x="371" y="325.51" width="1" height="9.68" fill="#86b57e"/>
<rect x="372" y="324.41" width="1" height="8.24" fill="#86b57e"/>
<rect x="373" y="322.64" width="1" height="3.26" fill="#86b57e"/>
<rect x="374" y="326.06" width="1" height="4.99" fill="#86b57e"/>
<rect x="376" y="326.42" width="1" height="10.2" fill="#86b57e"/>
<rect x="378" y="321.08" width="1" height="14.32" fill="#86b57e"/>
<rect x="379" y="326.11" width="1" height="4.37" fill="#86b57e"/>
<rect x="380" y="326.54" width="1" height="4.1" fill="#86b57e"/>
<rect x="381" y="317.56" width="1" height="4.63" fill="#86b57e"/>
<rect x="382" y="318.99" width="1" height="6.67" fill="#86b57e"/>
<rect x="385" y="315.38" width="1" height="2.07" fill="#86b57e"/>
<rect x="390" y="313.54" width="1" height="12.8" fill="#86b57e"/>
<rect x="393" y="310.87" width="1" height="5.19" fill="#86b57e"/>
<rect x="394" y="307.84" width="1" height="10.41" fill="#86b57e"/>
<rect x="395" y="309.34" width="1" height="10.11" fill="#86b57e"/>
<rect x="401" y="309.1" width="1" height="4.01" fill="#86b57e"/>
<rect x="402" y="304.43" width="1" height="15.82" fill="#86b57e"/>
<rect x="403" y="308.52" width="1" height="7.85" fill="#86b57e"/>
<rect x="405" y="307.01" width="1" height="15.86" fill="#86b57e"/>
<rect x="407" y="308.04" width="1" height="6.74" fill="#86b57e"/>
<rect x="408" y="306.59" width="1" height="21.27" fill="#86b57e"/>
<rect x="409" y="308.62" width="1" height="18.39" fill="#86b57e"/>
<rect x="412" y="308.85" width="1" height="16.36" fill="#86b57e"/>
<rect x="415" y="307.8" width="1" height="21.09" fill="#86b57e"/>
<rect x="417" y="307.82" width="1" height="14.35" fill="#86b57e"/>
<rect x="418" y="308.31" width="1" height="9.15" fill="#86b57e"/>
<rect x="421" y="310.53" width="1" height="7.31" fill="#86b57e"/>
<rect x="422" y="310.76" width="1" height="7.83" fill="#86b57e"/>
<rect x="425" y="319.02" width="1" height="14.9" fill="#86b57e"/>
<rect x="426" y="326.08" width="1" height="8.81" fill="#86b57e"/>
<rect x="428" y="322.97" width="1" height="7.74" fill="#86b57e"/>
<rect x="429" y="322.99" width="1" height="6.1" fill="#86b57e"/>
<rect x="430" y="322.6" width="1" height="13.07" fill="#86b57e"/>
<rect x="432" y="323.37" width="1" height="9.07" fill="#86b57e"/>
<rect x="435" y="320.9" width="1" height="7.24" fill="#86b57e"/>
<rect x="436" y="318.86" width="1" height="2.97" fill="#86b57e"/>
<rect x="438" y="319.92" width="1" height="3.83" fill="#86b57e"/>
<rect x="440" y="315.35" width="1" height="5.64" fill="#86b57e"/>
<rect x="441" y="317.7" width="1" height="7.4" fill="#86b57e"/>
<rect x="442" y="317.36" width="1" height="13.13" fill="#86b57e"/>
<rect x="443" y="314.55" width="1" height="9.57" fill="#86b57e"/>
<rect x="444" y="311.84" width="1" height="4.25" fill="#86b57e"/>
<rect x="446" y="314.85" width="1" height="3.25" fill="#86b57e"/>
<rect x="448" y="311.83" width="1" height="5.81" fill="#86b57e"/>
<rect x="449" y="317" width="1" height="7.57" fill="#86b57e"/>
<rect x="450" y="328.36" width="1" height="7" fill="#86b57e"/>
<rect x="451" y="341.13" width="1" height="3.55" fill="#86b57e"/>
<rect x="285.21" y="341.2" width="2" height="6" fill="#e0b800"/>
<rect x="99.3" y="334.5" width="1" height="8.5" fill="#86b57e"/>
<rect x="101.2" y="334.5" width="1" height="8.5" fill="#86b57e"/>
<rect x="104.5" y="337" width="1" height="6" fill="#86b57e"/>
<line x1="76.4" y1="289.3" x2="453" y2="289.3" stroke="#000" stroke-width="1"/>
<line x1="76.4" y1="289.3" x2="76.4" y2="347.2" stroke="#000" stroke-width="1"/>
<line x1="453" y1="289.3" x2="453" y2="347.2" stroke="#555" stroke-width="1"/>
<line x1="70.4" y1="347.2" x2="453" y2="347.2" stroke="#000" stroke-width="1"/>
<line x1="70.4" y1="347.2" x2="76.4" y2="347.2" stroke="#000" stroke-width="1"/>
<text x="68.4" y="349.3" font-size="9" text-anchor="end" fill="#222">0</text>
<line x1="73.9" y1="341.41" x2="76.4" y2="341.41" stroke="#000" stroke-width="1"/>
<line x1="73.9" y1="335.62" x2="76.4" y2="335.62" stroke="#000" stroke-width="1"/>
<line x1="73.9" y1="329.83" x2="76.4" y2="329.83" stroke="#000" stroke-width="1"/>
<line x1="73.9" y1="324.04" x2="76.4" y2="324.04" stroke="#000" stroke-width="1"/>
<line x1="70.4" y1="318.25" x2="76.4" y2="318.25" stroke="#000" stroke-width="1"/>
<text x="68.4" y="320.35" font-size="9" text-anchor="end" fill="#222">50000</text>
<line x1="73.9" y1="312.46" x2="76.4" y2="312.46" stroke="#000" stroke-width="1"/>
<line x1="73.9" y1="306.67" x2="76.4" y2="306.67" stroke="#000" stroke-width="1"/>
<line x1="73.9" y1="300.88" x2="76.4" y2="300.88" stroke="#000" stroke-width="1"/>
<line x1="73.9" y1="295.09" x2="76.4" y2="295.09" stroke="#000" stroke-width="1"/>
<line x1="70.4" y1="289.3" x2="76.4" y2="289.3" stroke="#000" stroke-width="1"/>
<text x="68.4" y="291.4" font-size="9" text-anchor="end" fill="#222">100000</text>
<line x1="76.4" y1="347.2" x2="76.4" y2="352.7" stroke="#000" stroke-width="1"/>
<text x="76.4" y="362" font-size="9" text-anchor="middle" fill="#222">0</text>
<line x1="83.85" y1="347.2" x2="83.85" y2="349.7" stroke="#000" stroke-width="1"/>
<line x1="91.3" y1="347.2" x2="91.3" y2="349.7" stroke="#000" stroke-width="1"/>
<line x1="98.76" y1="347.2" x2="98.76" y2="349.7" stroke="#000" stroke-width="1"/>
<line x1="106.21" y1="347.2" x2="106.21" y2="349.7" stroke="#000" stroke-width="1"/>
<line x1="113.66" y1="347.2" x2="113.66" y2="352.7" stroke="#000" stroke-width="1"/>
<text x="113.66" y="362" font-size="9" text-anchor="middle" fill="#222">500</text>
<line x1="121.11" y1="347.2" x2="121.11" y2="349.7" stroke="#000" stroke-width="1"/>
<line x1="128.56" y1="347.2" x2="128.56" y2="349.7" stroke="#000" stroke-width="1"/>
<line x1="136.02" y1="347.2" x2="136.02" y2="349.7" stroke="#000" stroke-width="1"/>
<line x1="143.47" y1="347.2" x2="143.47" y2="349.7" stroke="#000" stroke-width="1"/>
<line x1="150.92" y1="347.2" x2="150.92" y2="352.7" stroke="#000" stroke-width="1"/>
<text x="150.92" y="362" font-size="9" text-anchor="middle" fill="#222">1000</text>
<line x1="158.37" y1="347.2" x2="158.37" y2="349.7" stroke="#000" stroke-width="1"/>
<line x1="165.82" y1="347.2" x2="165.82" y2="349.7" stroke="#000" stroke-width="1"/>
<line x1="173.28" y1="347.2" x2="173.28" y2="349.7" stroke="#000" stroke-width="1"/>
<line x1="180.73" y1="347.2" x2="180.73" y2="349.7" stroke="#000" stroke-width="1"/>
<line x1="188.18" y1="347.2" x2="188.18" y2="352.7" stroke="#000" stroke-width="1"/>
<text x="188.18" y="362" font-size="9" text-anchor="middle" fill="#222">1500</text>
<line x1="195.63" y1="347.2" x2="195.63" y2="349.7" stroke="#000" stroke-width="1"/>
<line x1="203.08" y1="347.2" x2="203.08" y2="349.7" stroke="#000" stroke-width="1"/>
<line x1="210.54" y1="347.2" x2="210.54" y2="349.7" stroke="#000" stroke-width="1"/>
<line x1="217.99" y1="347.2" x2="217.99" y2="349.7" stroke="#000" stroke-width="1"/>
<line x1="225.44" y1="347.2" x2="225.44" y2="352.7" stroke="#000" stroke-width="1"/>
<text x="225.44" y="362" font-size="9" text-anchor="middle" fill="#222">2000</text>
<line x1="232.89" y1="347.2" x2="232.89" y2="349.7" stroke="#000" stroke-width="1"/>
<line x1="240.34" y1="347.2" x2="240.34" y2="349.7" stroke="#000" stroke-width="1"/>
<line x1="247.8" y1="347.2" x2="247.8" y2="349.7" stroke="#000" stroke-width="1"/>
<line x1="255.25" y1="347.2" x2="255.25" y2="349.7" stroke="#000" stroke-width="1"/>
<line x1="262.7" y1="347.2" x2="262.7" y2="352.7" stroke="#000" stroke-width="1"/>
<text x="262.7" y="362" font-size="9" text-anchor="middle" fill="#222">2500</text>
<line x1="270.15" y1="347.2" x2="270.15" y2="349.7" stroke="#000" stroke-width="1"/>
<line x1="277.6" y1="347.2" x2="277.6" y2="349.7" stroke="#000" stroke-width="1"/>
<line x1="285.06" y1="347.2" x2="285.06" y2="349.7" stroke="#000" stroke-width="1"/>
<line x1="292.51" y1="347.2" x2="292.51" y2="349.7" stroke="#000" stroke-width="1"/>
<line x1="299.96" y1="347.2" x2="299.96" y2="352.7" stroke="#000" stroke-width="1"/>
<text x="299.96" y="362" font-size="9" text-anchor="middle" fill="#222">3000</text>
<line x1="307.41" y1="347.2" x2="307.41" y2="349.7" stroke="#000" stroke-width="1"/>
<line x1="314.86" y1="347.2" x2="314.86" y2="349.7" stroke="#000" stroke-width="1"/>
<line x1="322.32" y1="347.2" x2="322.32" y2="349.7" stroke="#000" stroke-width="1"/>
<line x1="329.77" y1="347.2" x2="329.77" y2="349.7" stroke="#000" stroke-width="1"/>
<line x1="337.22" y1="347.2" x2="337.22" y2="352.7" stroke="#000" stroke-width="1"/>
<text x="337.22" y="362" font-size="9" text-anchor="middle" fill="#222">3500</text>
<line x1="344.67" y1="347.2" x2="344.67" y2="349.7" stroke="#000" stroke-width="1"/>
<line x1="352.12" y1="347.2" x2="352.12" y2="349.7" stroke="#000" stroke-width="1"/>
<line x1="359.58" y1="347.2" x2="359.58" y2="349.7" stroke="#000" stroke-width="1"/>
<line x1="367.03" y1="347.2" x2="367.03" y2="349.7" stroke="#000" stroke-width="1"/>
<line x1="374.48" y1="347.2" x2="374.48" y2="352.7" stroke="#000" stroke-width="1"/>
<text x="374.48" y="362" font-size="9" text-anchor="middle" fill="#222">4000</text>
<line x1="381.93" y1="347.2" x2="381.93" y2="349.7" stroke="#000" stroke-width="1"/>
<line x1="389.38" y1="347.2" x2="389.38" y2="349.7" stroke="#000" stroke-width="1"/>
<line x1="396.84" y1="347.2" x2="396.84" y2="349.7" stroke="#000" stroke-width="1"/>
<line x1="404.29" y1="347.2" x2="404.29" y2="349.7" stroke="#000" stroke-width="1"/>
<line x1="411.74" y1="347.2" x2="411.74" y2="352.7" stroke="#000" stroke-width="1"/>
<text x="411.74" y="362" font-size="9" text-anchor="middle" fill="#222">4500</text>
<line x1="419.19" y1="347.2" x2="419.19" y2="349.7" stroke="#000" stroke-width="1"/>
<line x1="426.64" y1="347.2" x2="426.64" y2="349.7" stroke="#000" stroke-width="1"/>
<line x1="434.1" y1="347.2" x2="434.1" y2="349.7" stroke="#000" stroke-width="1"/>
<line x1="441.55" y1="347.2" x2="441.55" y2="349.7" stroke="#000" stroke-width="1"/>
<line x1="449" y1="347.2" x2="449" y2="352.7" stroke="#000" stroke-width="1"/>
<text x="449" y="362" font-size="9" text-anchor="middle" fill="#222">5000</text>
<text x="254.2" y="274.5" font-size="10" text-anchor="middle" fill="#222">dL2 Hit (dL1 reload from L2)</text>
<path d="M72 453.2V434.15h1V434.82h1V434.61h1V446.99h1V447.02h1V447.74h1V448.62h1V447.36h1V446.8h1V448.06h1V446.68h1V447.86h1V447.38h1V448.73h1V448.43h1V448.31h1V447.87h1V447.24h1V446.66h1V446.9h1V446.97h1V446.64h1V435.63h1V435.02h1V434.21h1V435.29h1V446.84h1V447.1h1V447.47h1V446.64h1V448.13h1V447.93h1V447.4h1V448.45h1V448.77h1V447.31h1V448.52h1V446.63h1V447.04h1V447.1h1V447.6h1V446.69h1V447.97h1V447.97h1V448.37h1V446.63h1V447.36h1V448.63h1V446.79h1V448.65h1V448.61h1V447.2h1V449.03h1V447.89h1V449.36h1V447.47h1V449.53h1V449.49h1V449.33h1V448.61h1V448.17h1V448.54h1V448.18h1V448.55h1V448.89h1V448.32h1V447.71h1V449.25h1V449.59h1V448.95h1V450.81h1V449.93h1V450.21h1V449.84h1V451.12h1V450.76h1V451.03h1V450.44h1V450.56h1V450.33h1V450.94h1V451.56h1V449.66h1V450.78h1V451.42h1V450.55h1V450.6h1V450.5h1V451.03h1V449.94h1V451.29h1V450.89h1V451.24h1V449.77h1V450.25h1V451.74h1V450.75h1V450.06h1V450.51h1V450.85h1V451.19h1V449.62h1V451.62h1V449.66h1V451.52h1V450.73h1V449.92h1V450.72h1V450.68h1V451.03h1V450.87h1V449.67h1V451.49h1V449.74h1V450.08h1V449.72h1V450.89h1V450.6h1V451.75h1V450.89h1V449.65h1V449.79h1V451.54h1V451.52h1V450.53h1V450.82h1V450.56h1V450.13h1V451.33h1V450.63h1V450.13h1V450.98h1V450.25h1V451.09h1V451.8h1V450.57h1V450.78h1V451.25h1V449.8h1V451.22h1V449.66h1V449.92h1V451.31h1V449.75h1V451.37h1V450.02h1V449.79h1V450.38h1V450.62h1V450.98h1V451.66h1V451.12h1V449.66h1V450.62h1V450.48h1V449.81h1V450.08h1V450.49h1V450.55h1V449.94h1V450.82h1V451.67h1V450.1h1V451.07h1V451.66h1V451.58h1V450.89h1V451.74h1V449.68h1V451.61h1V450.95h1V451.69h1V451.11h1V450.98h1V451.09h1V451.31h1V451.42h1V449.98h1V450.17h1V449.97h1V449.9h1V450.67h1V451.12h1V449.89h1V450.89h1V450.53h1V451.09h1V450.49h1V450.67h1V449.84h1V450.58h1V450.24h1V449.7h1V451.24h1V451.02h1V450.67h1V450.31h1V450.95h1V451.14h1V449.77h1V449.66h1V451.72h1V451.57h1V449.82h1V450.28h1V450.43h1V450.38h1V451.44h1V451.37h1V451.8h1V450.53h1V451.79h1V450.98h1V451h1V450.65h1V450.94h1V450.72h1V451.16h1V449.74h1V451.19h1V451.09h1V450.63h1V450.74h1V449.94h1V451.38h1V450.33h1V450.84h1V449.9h1V450.77h1V451.47h1V449.92h1V450.82h1V450.39h1V450.1h1V450.05h1V450.09h1V451.03h1V450.1h1V451.22h1V450.85h1V451.09h1V449.9h1V450.72h1V451.69h1V451.71h1V450.61h1V450.8h1V450.02h1V450.96h1V451.14h1V450.61h1V449.79h1V450.04h1V450.41h1V451.37h1V449.63h1V450.75h1V450.38h1V449.68h1V450.13h1V451.78h1V449.76h1V451.52h1V451.44h1V450.15h1V451.28h1V451.79h1V451.44h1V450.92h1V451.73h1V450.59h1V450.39h1V450.28h1V451.4h1V450.33h1V450.34h1V451.53h1V450.99h1V449.92h1V450.39h1V450.89h1V451.59h1V450.86h1V450.12h1V449.91h1V450.4h1V450.14h1V451.17h1V451.54h1V450.71h1V451.38h1V449.93h1V450.49h1V450.89h1V450.86h1V451.72h1V450.89h1V451.74h1V451.19h1V451.44h1V450.8h1V450.98h1V450.59h1V450.22h1V449.82h1V449.71h1V451.18h1V449.63h1V451.51h1V451.36h1V449.79h1V451.31h1V450.48h1V451.52h1V450.29h1V449.94h1V451.45h1V451.1h1V449.94h1V450.86h1V450.65h1V450.81h1V450.83h1V450.16h1V449.82h1V451.75h1V451.75h1V450.97h1V451.31h1V451.59h1V451.48h1V450.76h1V451.49h1V450.46h1V451.05h1V451.08h1V451.6h1V449.67h1V450.38h1V451.53h1V450.65h1V451.29h1V449.9h1V451.52h1V451.71h1V451.47h1V449.7h1V450.57h1V451.11h1V449.93h1V449.89h1V451.25h1V451.01h1V450.47h1V450.04h1V449.63h1V451.14h1V449.71h1V449.74h1V450.76h1V450.99h1V451.79h1V451.45h1V449.77h1V451.48h1V450.09h1V450.19h1V450.03h1V450.19h1V450.22h1V451.24h1V450.44h1V451.37h1V451h1V451.13h1V451.78h1V451.06h1V451.18h1V450.57h1V450.6h1V450.64h1V453.2Z" fill="#0b3c7c"/>
<rect x="72" y="432.41" width="1" height="2.73" fill="#6b90c2"/>
<rect x="75" y="441.77" width="1" height="6.21" fill="#6b90c2"/>
<rect x="76" y="445.98" width="1" height="2.04" fill="#6b90c2"/>
<rect x="79" y="442.49" width="1" height="5.87" fill="#27558f"/>
<rect x="80" y="440.33" width="1" height="7.47" fill="#6b90c2"/>
<rect x="81" y="443.92" width="1" height="5.15" fill="#27558f"/>
<rect x="85" y="446.05" width="1" height="3.68" fill="#6b90c2"/>
<rect x="89" y="441.25" width="1" height="6.99" fill="#6b90c2"/>
<rect x="91" y="445.54" width="1" height="2.35" fill="#6b90c2"/>
<rect x="92" y="442.89" width="1" height="5.08" fill="#27558f"/>
<rect x="94" y="427.72" width="1" height="8.9" fill="#6b90c2"/>
<rect x="95" y="431.79" width="1" height="4.23" fill="#6b90c2"/>
<rect x="96" y="431.99" width="1" height="3.21" fill="#6b90c2"/>
<rect x="98" y="437.64" width="1" height="10.2" fill="#6b90c2"/>
<rect x="99" y="441.9" width="1" height="6.2" fill="#6b90c2"/>
<rect x="103" y="433.54" width="1" height="15.39" fill="#6b90c2"/>
<rect x="104" y="439.47" width="1" height="8.93" fill="#27558f"/>
<rect x="106" y="445.82" width="1" height="3.94" fill="#6b90c2"/>
<rect x="107" y="441.98" width="1" height="6.33" fill="#6b90c2"/>
<rect x="109" y="444.84" width="1" height="2.79" fill="#6b90c2"/>
<rect x="111" y="444.17" width="1" height="3.92" fill="#27558f"/>
<rect x="112" y="432.6" width="1" height="16" fill="#27558f"/>
<rect x="116" y="446.97" width="1" height="2.4" fill="#6b90c2"/>
<rect x="117" y="445.48" width="1" height="2.15" fill="#6b90c2"/>
<rect x="118" y="446.13" width="1" height="2.24" fill="#27558f"/>
<rect x="121" y="444.93" width="1" height="4.72" fill="#27558f"/>
<rect x="124" y="445.73" width="1" height="4.3" fill="#6b90c2"/>
<rect x="125" y="443.87" width="1" height="5.02" fill="#6b90c2"/>
<rect x="126" y="445.89" width="1" height="4.47" fill="#27558f"/>
<rect x="127" y="445.67" width="1" height="2.8" fill="#6b90c2"/>
<rect x="128" y="438.73" width="1" height="11.8" fill="#6b90c2"/>
<rect x="129" y="447" width="1" height="3.5" fill="#6b90c2"/>
<rect x="130" y="448.11" width="1" height="2.22" fill="#6b90c2"/>
<rect x="138" y="443.12" width="1" height="5.59" fill="#6b90c2"/>
<rect x="139" y="440.87" width="1" height="9.37" fill="#27558f"/>
<rect x="140" y="444.81" width="1" height="5.79" fill="#6b90c2"/>
<rect x="141" y="447.53" width="1" height="2.41" fill="#6b90c2"/>
<rect x="142" y="447.88" width="1" height="3.93" fill="#27558f"/>
<rect x="146" y="448.47" width="1" height="3.65" fill="#6b90c2"/>
<rect x="148" y="444.82" width="1" height="7.2" fill="#27558f"/>
<rect x="149" y="446.51" width="1" height="4.93" fill="#27558f"/>
<rect x="150" y="448.56" width="1" height="3" fill="#27558f"/>
<rect x="152" y="448.44" width="1" height="3.5" fill="#27558f"/>
<rect x="154" y="440.06" width="1" height="10.6" fill="#6b90c2"/>
<rect x="155" y="446.1" width="1" height="5.68" fill="#6b90c2"/>
<rect x="157" y="449.39" width="1" height="2.16" fill="#6b90c2"/>
<rect x="158" y="449.33" width="1" height="2.27" fill="#6b90c2"/>
<rect x="161" y="446.86" width="1" height="4.08" fill="#6b90c2"/>
<rect x="164" y="448.53" width="1" height="3.71" fill="#6b90c2"/>
<rect x="165" y="448.03" width="1" height="2.73" fill="#6b90c2"/>
<rect x="166" y="438.84" width="1" height="12.41" fill="#6b90c2"/>
<rect x="170" y="446.34" width="1" height="5.16" fill="#6b90c2"/>
<rect x="173" y="443.91" width="1" height="6.71" fill="#6b90c2"/>
<rect x="174" y="450.22" width="1" height="2.39" fill="#6b90c2"/>
<rect x="175" y="443.1" width="1" height="7.57" fill="#6b90c2"/>
<rect x="177" y="448.89" width="1" height="2.84" fill="#6b90c2"/>
<rect x="179" y="449.42" width="1" height="2.3" fill="#27558f"/>
<rect x="180" y="447.54" width="1" height="4.14" fill="#27558f"/>
<rect x="182" y="448.84" width="1" height="3.03" fill="#6b90c2"/>
<rect x="185" y="445.02" width="1" height="5.72" fill="#6b90c2"/>
<rect x="186" y="443.6" width="1" height="7.49" fill="#6b90c2"/>
<rect x="187" y="447.76" width="1" height="2.96" fill="#6b90c2"/>
<rect x="188" y="449.87" width="1" height="2.02" fill="#27558f"/>
<rect x="189" y="448.5" width="1" height="3.1" fill="#27558f"/>
<rect x="190" y="446.46" width="1" height="6.3" fill="#6b90c2"/>
<rect x="191" y="447.95" width="1" height="3.93" fill="#27558f"/>
<rect x="193" y="446.98" width="1" height="3.81" fill="#6b90c2"/>
<rect x="194" y="448.83" width="1" height="3.71" fill="#6b90c2"/>
<rect x="195" y="446.51" width="1" height="6" fill="#27558f"/>
<rect x="197" y="447.43" width="1" height="4.39" fill="#6b90c2"/>
<rect x="198" y="449.46" width="1" height="2.1" fill="#27558f"/>
<rect x="199" y="448.3" width="1" height="2.83" fill="#6b90c2"/>
<rect x="202" y="448.2" width="1" height="2.93" fill="#6b90c2"/>
<rect x="204" y="448.38" width="1" height="2.87" fill="#27558f"/>
<rect x="208" y="447.06" width="1" height="4.71" fill="#6b90c2"/>
<rect x="213" y="444.21" width="1" height="6.71" fill="#6b90c2"/>
<rect x="214" y="449.51" width="1" height="2.79" fill="#27558f"/>
<rect x="218" y="442.34" width="1" height="8.45" fill="#6b90c2"/>
<rect x="222" y="448.93" width="1" height="3.74" fill="#27558f"/>
<rect x="227" y="447.61" width="1" height="3.2" fill="#6b90c2"/>
<rect x="234" y="446.31" width="1" height="4.8" fill="#27558f"/>
<rect x="236" y="445.18" width="1" height="7.48" fill="#6b90c2"/>
<rect x="240" y="442.98" width="1" height="7.7" fill="#6b90c2"/>
<rect x="241" y="445.43" width="1" height="7.18" fill="#27558f"/>
<rect x="242" y="447.11" width="1" height="4.85" fill="#6b90c2"/>
<rect x="243" y="449.11" width="1" height="3.58" fill="#6b90c2"/>
<rect x="246" y="445.84" width="1" height="6.25" fill="#27558f"/>
<rect x="247" y="449.51" width="1" height="2.8" fill="#27558f"/>
<rect x="249" y="443.22" width="1" height="7.77" fill="#6b90c2"/>
<rect x="251" y="448.6" width="1" height="2.37" fill="#6b90c2"/>
<rect x="253" y="445.02" width="1" height="6.65" fill="#6b90c2"/>
<rect x="254" y="446.23" width="1" height="5.89" fill="#6b90c2"/>
<rect x="256" y="446.12" width="1" height="5.77" fill="#6b90c2"/>
<rect x="258" y="436.09" width="1" height="16" fill="#27558f"/>
<rect x="259" y="445.04" width="1" height="6.45" fill="#6b90c2"/>
<rect x="260" y="441.08" width="1" height="10.59" fill="#6b90c2"/>
<rect x="261" y="436.33" width="1" height="14.52" fill="#6b90c2"/>
<rect x="264" y="434.7" width="1" height="16" fill="#6b90c2"/>
<rect x="265" y="445.14" width="1" height="7.1" fill="#6b90c2"/>
<rect x="268" y="448.95" width="1" height="2.36" fill="#6b90c2"/>
<rect x="272" y="448.06" width="1" height="2.6" fill="#6b90c2"/>
<rect x="278" y="448.83" width="1" height="2.56" fill="#27558f"/>
<rect x="279" y="450.22" width="1" height="2.23" fill="#6b90c2"/>
<rect x="281" y="450.6" width="1" height="2.2" fill="#6b90c2"/>
<rect x="284" y="449" width="1" height="2.98" fill="#6b90c2"/>
<rect x="285" y="436" width="1" height="16" fill="#27558f"/>
<rect x="286" y="447.88" width="1" height="3.77" fill="#6b90c2"/>
<rect x="288" y="449.44" width="1" height="2.28" fill="#6b90c2"/>
<rect x="290" y="436.87" width="1" height="13.87" fill="#6b90c2"/>
<rect x="291" y="450.18" width="1" height="2.02" fill="#27558f"/>
<rect x="294" y="446.83" width="1" height="4.91" fill="#6b90c2"/>
<rect x="295" y="445.37" width="1" height="5.57" fill="#6b90c2"/>
<rect x="298" y="448.1" width="1" height="3.75" fill="#6b90c2"/>
<rect x="301" y="445.35" width="1" height="7.11" fill="#6b90c2"/>
<rect x="304" y="447.18" width="1" height="4.21" fill="#6b90c2"/>
<rect x="308" y="445.81" width="1" height="6.22" fill="#27558f"/>
<rect x="309" y="446.14" width="1" height="4.96" fill="#6b90c2"/>
<rect x="319" y="448.65" width="1" height="2.37" fill="#6b90c2"/>
<rect x="320" y="449.78" width="1" height="2.18" fill="#6b90c2"/>
<rect x="322" y="449.06" width="1" height="2.55" fill="#27558f"/>
<rect x="324" y="444.09" width="1" height="6.95" fill="#6b90c2"/>
<rect x="327" y="447.59" width="1" height="3.04" fill="#6b90c2"/>
<rect x="328" y="447.2" width="1" height="4.55" fill="#27558f"/>
<rect x="329" y="447.87" width="1" height="3.51" fill="#6b90c2"/>
<rect x="331" y="444.63" width="1" height="6.5" fill="#6b90c2"/>
<rect x="332" y="444.82" width="1" height="7.95" fill="#6b90c2"/>
<rect x="333" y="448.14" width="1" height="2.62" fill="#27558f"/>
<rect x="337" y="448.04" width="1" height="4.23" fill="#6b90c2"/>
<rect x="338" y="448.27" width="1" height="4.51" fill="#6b90c2"/>
<rect x="339" y="446.76" width="1" height="5.68" fill="#6b90c2"/>
<rect x="342" y="437.55" width="1" height="14.04" fill="#6b90c2"/>
<rect x="344" y="445.56" width="1" height="5.72" fill="#6b90c2"/>
<rect x="346" y="438.8" width="1" height="12.53" fill="#6b90c2"/>
<rect x="347" y="448.36" width="1" height="2.98" fill="#6b90c2"/>
<rect x="350" y="448.67" width="1" height="2.25" fill="#27558f"/>
<rect x="352" y="445.33" width="1" height="6.56" fill="#27558f"/>
<rect x="353" y="449.74" width="1" height="2.84" fill="#6b90c2"/>
<rect x="354" y="443.89" width="1" height="7.97" fill="#27558f"/>
<rect x="356" y="436.39" width="1" height="14.52" fill="#6b90c2"/>
<rect x="359" y="445.55" width="1" height="6.63" fill="#6b90c2"/>
<rect x="363" y="440.59" width="1" height="10.35" fill="#6b90c2"/>
<rect x="364" y="443.87" width="1" height="7.62" fill="#27558f"/>
<rect x="365" y="445.06" width="1" height="6.84" fill="#6b90c2"/>
<rect x="367" y="449.92" width="1" height="2.8" fill="#27558f"/>
<rect x="368" y="448.23" width="1" height="3.66" fill="#6b90c2"/>
<rect x="371" y="449.71" width="1" height="2.73" fill="#27558f"/>
<rect x="373" y="449.9" width="1" height="2.08" fill="#6b90c2"/>
<rect x="376" y="448.6" width="1" height="2.22" fill="#6b90c2"/>
<rect x="377" y="442.27" width="1" height="8.44" fill="#6b90c2"/>
<rect x="378" y="448.98" width="1" height="3.2" fill="#6b90c2"/>
<rect x="379" y="448.53" width="1" height="2.11" fill="#6b90c2"/>
<rect x="380" y="447.98" width="1" height="4.53" fill="#6b90c2"/>
<rect x="381" y="442.8" width="1" height="9.56" fill="#27558f"/>
<rect x="385" y="449.07" width="1" height="3.45" fill="#6b90c2"/>
<rect x="386" y="444.58" width="1" height="6.71" fill="#27558f"/>
<rect x="387" y="448.05" width="1" height="2.9" fill="#6b90c2"/>
<rect x="388" y="448.74" width="1" height="3.71" fill="#6b90c2"/>
<rect x="391" y="446.2" width="1" height="5.66" fill="#27558f"/>
<rect x="392" y="445.69" width="1" height="5.96" fill="#6b90c2"/>
<rect x="394" y="446.96" width="1" height="4.87" fill="#6b90c2"/>
<rect x="397" y="446.98" width="1" height="5.77" fill="#6b90c2"/>
<rect x="399" y="447" width="1" height="4.98" fill="#6b90c2"/>
<rect x="400" y="446.77" width="1" height="5.54" fill="#27558f"/>
<rect x="403" y="445.06" width="1" height="6.7" fill="#6b90c2"/>
<rect x="404" y="441.24" width="1" height="11.25" fill="#27558f"/>
<rect x="405" y="443.53" width="1" height="7.93" fill="#6b90c2"/>
<rect x="406" y="443.81" width="1" height="8.25" fill="#27558f"/>
<rect x="407" y="449.1" width="1" height="2.98" fill="#6b90c2"/>
<rect x="408" y="446.53" width="1" height="6.07" fill="#27558f"/>
<rect x="409" y="443.97" width="1" height="6.69" fill="#6b90c2"/>
<rect x="410" y="447.27" width="1" height="4.11" fill="#6b90c2"/>
<rect x="411" y="436.53" width="1" height="16" fill="#27558f"/>
<rect x="414" y="448.55" width="1" height="2.35" fill="#6b90c2"/>
<rect x="415" y="449.05" width="1" height="3.46" fill="#6b90c2"/>
<rect x="416" y="450.5" width="1" height="2.2" fill="#27558f"/>
<rect x="419" y="448.99" width="1" height="2.57" fill="#27558f"/>
<rect x="422" y="446.24" width="1" height="4.65" fill="#6b90c2"/>
<rect x="423" y="448.33" width="1" height="3.92" fill="#6b90c2"/>
<rect x="425" y="440.91" width="1" height="10.56" fill="#6b90c2"/>
<rect x="427" y="445.2" width="1" height="5.44" fill="#6b90c2"/>
<rect x="430" y="436.77" width="1" height="13.97" fill="#27558f"/>
<rect x="431" y="448.79" width="1" height="2.96" fill="#6b90c2"/>
<rect x="437" y="444.47" width="1" height="6.62" fill="#6b90c2"/>
<rect x="439" y="443.11" width="1" height="7.92" fill="#27558f"/>
<rect x="440" y="449.03" width="1" height="2.16" fill="#6b90c2"/>
<rect x="441" y="447.21" width="1" height="4.01" fill="#27558f"/>
<rect x="442" y="448.16" width="1" height="4.08" fill="#6b90c2"/>
<rect x="443" y="444" width="1" height="7.44" fill="#27558f"/>
<rect x="445" y="447.35" width="1" height="4.64" fill="#27558f"/>
<rect x="448" y="446.37" width="1" height="5.69" fill="#6b90c2"/>
<rect x="449" y="447.07" width="1" height="5.11" fill="#6b90c2"/>
<rect x="72.5" y="420.8" width="1" height="32.4" fill="#6b90c2"/>
<rect x="73.5" y="424" width="1" height="29.2" fill="#6b90c2"/>
<rect x="95.5" y="418" width="1" height="35.2" fill="#6b90c2"/>
<rect x="96.5" y="426" width="1" height="27.2" fill="#6b90c2"/>
<rect x="124.5" y="413.6" width="2" height="39.6" fill="#0b3c7c"/>
<rect x="283.2" y="411.4" width="1.5" height="41.8" fill="#0b3c7c"/>
<rect x="452" y="431.5" width="1" height="21.7" fill="#0b3c7c"/>
<rect x="316" y="439.5" width="1" height="13.7" fill="#6b90c2"/>
<rect x="320" y="440.3" width="1" height="12.9" fill="#6b90c2"/>
<rect x="353" y="438.2" width="1" height="15" fill="#6b90c2"/>
<rect x="366.6" y="438.7" width="1" height="14.5" fill="#6b90c2"/>
<rect x="416.6" y="436.9" width="1" height="16.3" fill="#6b90c2"/>
<rect x="422" y="439.5" width="1" height="13.7" fill="#6b90c2"/>
<rect x="442" y="440.3" width="1" height="12.9" fill="#6b90c2"/>
<rect x="163" y="441" width="1" height="12.2" fill="#6b90c2"/>
<rect x="195.8" y="441" width="1" height="12.2" fill="#6b90c2"/>
<rect x="208.4" y="442" width="1" height="11.2" fill="#6b90c2"/>
<rect x="151.7" y="442" width="1" height="11.2" fill="#6b90c2"/>
<line x1="71.9" y1="395.1" x2="453.5" y2="395.1" stroke="#000" stroke-width="1"/>
<line x1="71.9" y1="395.1" x2="71.9" y2="453.2" stroke="#000" stroke-width="1"/>
<line x1="453.5" y1="395.1" x2="453.5" y2="453.2" stroke="#333" stroke-width="1"/>
<line x1="65.9" y1="453.2" x2="453.5" y2="453.2" stroke="#000" stroke-width="1"/>
<line x1="65.9" y1="453.2" x2="71.9" y2="453.2" stroke="#000" stroke-width="1"/>
<text x="63.9" y="456" font-size="9" text-anchor="end" fill="#222">0</text>
<line x1="69.4" y1="445.94" x2="71.9" y2="445.94" stroke="#000" stroke-width="1"/>
<line x1="69.4" y1="438.68" x2="71.9" y2="438.68" stroke="#000" stroke-width="1"/>
<line x1="69.4" y1="431.41" x2="71.9" y2="431.41" stroke="#000" stroke-width="1"/>
<line x1="65.9" y1="424.15" x2="71.9" y2="424.15" stroke="#000" stroke-width="1"/>
<text x="63.9" y="426.95" font-size="9" text-anchor="end" fill="#222">2000</text>
<line x1="69.4" y1="416.89" x2="71.9" y2="416.89" stroke="#000" stroke-width="1"/>
<line x1="69.4" y1="409.62" x2="71.9" y2="409.62" stroke="#000" stroke-width="1"/>
<line x1="69.4" y1="402.36" x2="71.9" y2="402.36" stroke="#000" stroke-width="1"/>
<line x1="65.9" y1="395.1" x2="71.9" y2="395.1" stroke="#000" stroke-width="1"/>
<text x="63.9" y="397.9" font-size="9" text-anchor="end" fill="#222">4000</text>
<line x1="71.9" y1="453.2" x2="71.9" y2="458.7" stroke="#000" stroke-width="1"/>
<text x="71.9" y="468" font-size="9" text-anchor="middle" fill="#222">0</text>
<line x1="79.43" y1="453.2" x2="79.43" y2="455.7" stroke="#000" stroke-width="1"/>
<line x1="86.96" y1="453.2" x2="86.96" y2="455.7" stroke="#000" stroke-width="1"/>
<line x1="94.48" y1="453.2" x2="94.48" y2="455.7" stroke="#000" stroke-width="1"/>
<line x1="102.01" y1="453.2" x2="102.01" y2="455.7" stroke="#000" stroke-width="1"/>
<line x1="109.54" y1="453.2" x2="109.54" y2="458.7" stroke="#000" stroke-width="1"/>
<text x="109.54" y="468" font-size="9" text-anchor="middle" fill="#222">500</text>
<line x1="117.07" y1="453.2" x2="117.07" y2="455.7" stroke="#000" stroke-width="1"/>
<line x1="124.6" y1="453.2" x2="124.6" y2="455.7" stroke="#000" stroke-width="1"/>
<line x1="132.12" y1="453.2" x2="132.12" y2="455.7" stroke="#000" stroke-width="1"/>
<line x1="139.65" y1="453.2" x2="139.65" y2="455.7" stroke="#000" stroke-width="1"/>
<line x1="147.18" y1="453.2" x2="147.18" y2="458.7" stroke="#000" stroke-width="1"/>
<text x="147.18" y="468" font-size="9" text-anchor="middle" fill="#222">1000</text>
<line x1="154.71" y1="453.2" x2="154.71" y2="455.7" stroke="#000" stroke-width="1"/>
<line x1="162.24" y1="453.2" x2="162.24" y2="455.7" stroke="#000" stroke-width="1"/>
<line x1="169.76" y1="453.2" x2="169.76" y2="455.7" stroke="#000" stroke-width="1"/>
<line x1="177.29" y1="453.2" x2="177.29" y2="455.7" stroke="#000" stroke-width="1"/>
<line x1="184.82" y1="453.2" x2="184.82" y2="458.7" stroke="#000" stroke-width="1"/>
<text x="184.82" y="468" font-size="9" text-anchor="middle" fill="#222">1500</text>
<line x1="192.35" y1="453.2" x2="192.35" y2="455.7" stroke="#000" stroke-width="1"/>
<line x1="199.88" y1="453.2" x2="199.88" y2="455.7" stroke="#000" stroke-width="1"/>
<line x1="207.4" y1="453.2" x2="207.4" y2="455.7" stroke="#000" stroke-width="1"/>
<line x1="214.93" y1="453.2" x2="214.93" y2="455.7" stroke="#000" stroke-width="1"/>
<line x1="222.46" y1="453.2" x2="222.46" y2="458.7" stroke="#000" stroke-width="1"/>
<text x="222.46" y="468" font-size="9" text-anchor="middle" fill="#222">2000</text>
<line x1="229.99" y1="453.2" x2="229.99" y2="455.7" stroke="#000" stroke-width="1"/>
<line x1="237.52" y1="453.2" x2="237.52" y2="455.7" stroke="#000" stroke-width="1"/>
<line x1="245.04" y1="453.2" x2="245.04" y2="455.7" stroke="#000" stroke-width="1"/>
<line x1="252.57" y1="453.2" x2="252.57" y2="455.7" stroke="#000" stroke-width="1"/>
<line x1="260.1" y1="453.2" x2="260.1" y2="458.7" stroke="#000" stroke-width="1"/>
<text x="260.1" y="468" font-size="9" text-anchor="middle" fill="#222">2500</text>
<line x1="267.63" y1="453.2" x2="267.63" y2="455.7" stroke="#000" stroke-width="1"/>
<line x1="275.16" y1="453.2" x2="275.16" y2="455.7" stroke="#000" stroke-width="1"/>
<line x1="282.68" y1="453.2" x2="282.68" y2="455.7" stroke="#000" stroke-width="1"/>
<line x1="290.21" y1="453.2" x2="290.21" y2="455.7" stroke="#000" stroke-width="1"/>
<line x1="297.74" y1="453.2" x2="297.74" y2="458.7" stroke="#000" stroke-width="1"/>
<text x="297.74" y="468" font-size="9" text-anchor="middle" fill="#222">3000</text>
<line x1="305.27" y1="453.2" x2="305.27" y2="455.7" stroke="#000" stroke-width="1"/>
<line x1="312.8" y1="453.2" x2="312.8" y2="455.7" stroke="#000" stroke-width="1"/>
<line x1="320.32" y1="453.2" x2="320.32" y2="455.7" stroke="#000" stroke-width="1"/>
<line x1="327.85" y1="453.2" x2="327.85" y2="455.7" stroke="#000" stroke-width="1"/>
<line x1="335.38" y1="453.2" x2="335.38" y2="458.7" stroke="#000" stroke-width="1"/>
<text x="335.38" y="468" font-size="9" text-anchor="middle" fill="#222">3500</text>
<line x1="342.91" y1="453.2" x2="342.91" y2="455.7" stroke="#000" stroke-width="1"/>
<line x1="350.44" y1="453.2" x2="350.44" y2="455.7" stroke="#000" stroke-width="1"/>
<line x1="357.96" y1="453.2" x2="357.96" y2="455.7" stroke="#000" stroke-width="1"/>
<line x1="365.49" y1="453.2" x2="365.49" y2="455.7" stroke="#000" stroke-width="1"/>
<line x1="373.02" y1="453.2" x2="373.02" y2="458.7" stroke="#000" stroke-width="1"/>
<text x="373.02" y="468" font-size="9" text-anchor="middle" fill="#222">4000</text>
<line x1="380.55" y1="453.2" x2="380.55" y2="455.7" stroke="#000" stroke-width="1"/>
<line x1="388.08" y1="453.2" x2="388.08" y2="455.7" stroke="#000" stroke-width="1"/>
<line x1="395.6" y1="453.2" x2="395.6" y2="455.7" stroke="#000" stroke-width="1"/>
<line x1="403.13" y1="453.2" x2="403.13" y2="455.7" stroke="#000" stroke-width="1"/>
<line x1="410.66" y1="453.2" x2="410.66" y2="458.7" stroke="#000" stroke-width="1"/>
<text x="410.66" y="468" font-size="9" text-anchor="middle" fill="#222">4500</text>
<line x1="418.19" y1="453.2" x2="418.19" y2="455.7" stroke="#000" stroke-width="1"/>
<line x1="425.72" y1="453.2" x2="425.72" y2="455.7" stroke="#000" stroke-width="1"/>
<line x1="433.24" y1="453.2" x2="433.24" y2="455.7" stroke="#000" stroke-width="1"/>
<line x1="440.77" y1="453.2" x2="440.77" y2="455.7" stroke="#000" stroke-width="1"/>
<line x1="448.3" y1="453.2" x2="448.3" y2="458.7" stroke="#000" stroke-width="1"/>
<text x="448.3" y="468" font-size="9" text-anchor="middle" fill="#222">5000</text>
<text x="254.2" y="380.7" font-size="10" text-anchor="middle" fill="#222">dL2 Miss (dL1 reload from Memory)</text>
</g>
</svg>
<div class="abs" style="left:473px;top:53px;width:12px;height:426px;background:linear-gradient(90deg,#dcdcdc,#f2f2f2 30%,#fafafa 50%,#e8e8e8 80%,#d6d6d6)"></div>
<div class="abs" style="left:36px;top:479px;width:135px;height:12px;background:#f0f0f0;border-top:1px solid #c8c8c8;box-sizing:border-box"></div>
<div class="abs" style="left:171px;top:479px;width:302px;height:12px;background:linear-gradient(#e0e0e0,#f8f8f8 45%,#ececec)"></div>
<div class="abs" style="left:473px;top:479px;width:12px;height:12px;background:#f4f4f4"></div>
<div class="abs" style="left:476.5px;top:482px;width:5px;height:5px;background:#8e8e8e;border:1px solid #666"></div>
<div class="abs" style="left:43px;top:484.5px;width:4px;height:1.2px;background:#111"></div>
<div class="abs" style="left:58px;top:483px;width:98px;height:4.5px;border-radius:2.5px;background:linear-gradient(#555,#9a9a9a 60%,#c8c8c8)"></div>
<div class="abs" style="left:159.5px;top:479px;font-size:11px;line-height:12px;color:#111">+</div>
<div class="abs" style="left:51px;top:479.8px;width:10.5px;height:10.5px;border-radius:50%;background:radial-gradient(ellipse 55% 30% at 50% 22%,rgba(255,255,255,0.85),rgba(255,255,255,0) 100%),radial-gradient(circle at 50% 90%,#d0f8ff 0,#70b8f8 45%,#2a64c8 80%,#1a3a90 100%);box-shadow:0 0 0 0.5px #2a4a90"></div>
<div class="abs" style="left:371px;top:495px;width:5px;height:3px;border-radius:3px 3px 0 0;background:#333"></div>
<div class="abs" style="left:488px;top:268.5px;width:5px;height:3px;border-radius:3px 3px 0 0;background:#333"></div>
<div id="rp2" class="abs" style="left:494px;top:52px;width:218px;height:440px;border:1px solid #a3a3a3;background:#fff;box-sizing:border-box;overflow:hidden">
  <div class="abs" style="left:4.5px;top:1.5px;font-size:9px;letter-spacing:0.5px;line-height:10.9px;white-space:nowrap;color:#1a1a1a">xplanetPantherEngine [9199]<br>Thread 0x332E948<br>User</div>
  <div class="abs" style="left:0;top:36.5px;width:218px;height:1.5px;background:#8e8e8e"></div>
  <div class="row" style="top:37.8px;height:12.64px;background:#d4d4d4"></div>
<div class="row" style="top:50.44px;height:12.64px;background:#edf3fe"></div>
<div class="row" style="top:63.08px;height:12.64px;background:#ffffff"></div>
<div class="row" style="top:75.72px;height:12.64px;background:#edf3fe"></div>
<div class="row" style="top:88.36px;height:12.64px;background:#ffffff"></div>
<div class="row" style="top:101px;height:12.64px;background:#edf3fe"></div>
<div class="row" style="top:113.64px;height:12.64px;background:#ffffff"></div>
<div class="row" style="top:126.28px;height:12.64px;background:#edf3fe"></div>
<div class="row" style="top:138.92px;height:12.64px;background:#ffffff"></div>
<div class="row" style="top:151.56px;height:12.64px;background:#edf3fe"></div>
<div class="row" style="top:164.2px;height:12.64px;background:#ffffff"></div>
<div class="row" style="top:176.84px;height:12.64px;background:#edf3fe"></div>
<div class="row" style="top:189.48px;height:12.64px;background:#ffffff"></div>
<div class="row" style="top:202.12px;height:12.64px;background:#edf3fe"></div>
<div class="row" style="top:214.76px;height:12.64px;background:#ffffff"></div>
<div class="row" style="top:227.4px;height:12.64px;background:#edf3fe"></div>
<div class="row" style="top:240.04px;height:12.64px;background:#ffffff"></div>
<div class="row" style="top:252.68px;height:12.64px;background:#edf3fe"></div>
<div class="row" style="top:265.32px;height:12.64px;background:#ffffff"></div>
<div class="row" style="top:277.96px;height:12.64px;background:#edf3fe"></div>
<div class="row" style="top:290.6px;height:12.64px;background:#ffffff"></div>
<div class="row" style="top:303.24px;height:12.64px;background:#edf3fe"></div>
<div class="row" style="top:315.88px;height:12.64px;background:#ffffff"></div>
<div class="row" style="top:328.52px;height:12.64px;background:#edf3fe"></div>
<div class="row" style="top:341.16px;height:12.64px;background:#ffffff"></div>
<div class="row" style="top:353.8px;height:12.64px;background:#edf3fe"></div>
<div class="row" style="top:366.44px;height:12.64px;background:#ffffff"></div>
<div class="row" style="top:379.08px;height:12.64px;background:#edf3fe"></div>
<div class="row" style="top:391.72px;height:12.64px;background:#ffffff"></div>
<div class="row" style="top:404.36px;height:12.64px;background:#edf3fe"></div>
<div class="row" style="top:417px;height:12.64px;background:#ffffff"></div>
<div class="row" style="top:429.64px;height:8.86px;background:#edf3fe"></div>
<div class="rt num" style="top:38.3px">14</div><div class="rt nm" style="top:38.3px">compress_block</div>
<div class="rt num" style="top:50.94px">13</div><div class="rt nm" style="top:50.94px">_tr_flush_block</div>
<div class="rt num" style="top:63.58px">12</div><div class="rt nm" style="top:63.58px">deflate_slow</div>
<div class="rt num" style="top:76.22px">11</div><div class="rt nm" style="top:76.22px">deflate</div>
<div class="rt num" style="top:88.86px">10</div><div class="rt nm" style="top:88.86px">0x851f8 [244B]</div>
<div class="rt num" style="top:101.5px">9</div><div class="rt nm" style="top:101.5px">0x84620 [3.0KB]</div>
<div class="rt num" style="top:114.14px">8</div><div class="rt nm" style="top:114.14px">0x74644 [416B]</div>
<div class="rt num" style="top:126.78px">7</div><div class="rt nm" style="top:126.78px">0x744b8 [88B]</div>
<div class="rt num" style="top:139.42px">6</div><div class="rt nm" style="top:139.42px">0x3c69c [1.5KB]</div>
<div class="rt num" style="top:152.06px">5</div><div class="rt nm" style="top:152.06px">0x3b1b8 [672B]</div>
<div class="rt num" style="top:164.7px">4</div><div class="rt nm" style="top:164.7px">0x37504 [4.1KB]</div>
<div class="rt num" style="top:177.34px">3</div><div class="rt nm" style="top:177.34px">0x1ea54 [5.7KB]</div>
<div class="rt num" style="top:189.98px">2</div><div class="rt nm" style="top:189.98px">0x2d2c [520B]</div>
<div class="rt num" style="top:202.62px">1</div><div class="rt nm" style="top:202.62px">0x2d2c [520B] [STACK TOP]</div>
  <div class="abs" style="left:26.5px;top:38px;width:1px;height:402px;background:#c9c9c9"></div>
</div>
<div class="lbl" style="left:37px">Process:</div>
<div class="pop" style="left:79px;width:258px"><div class="t">(26.5%) xplanetPantherEngine [9199]</div><div class="cap"></div></div>
<div class="lbl" style="left:344px">Thread:</div>
<div class="pop" style="left:383.5px;width:122.5px"><div class="t" style="font-size:9.8px">0x332E948 (26.5%)</div><div class="cap"></div></div>
<div class="lbl" style="left:513.5px">Time:</div>
<div class="pop" style="left:544px;width:70px"><div class="t" style="font-size:9.4px">Relative</div><div class="cap"></div></div>
<div class="lbl" style="left:620.5px">View:</div>
<div class="pop" style="left:652px;width:60px"><div class="t" style="font-size:9.5px">Thread</div><div class="cap"></div></div>
<svg class="abs" style="left:716px;top:524px" width="15" height="14" viewBox="0 0 15 14"><path d="M14 4L4 14M14 8L8 14M14 12L12 14" stroke="#8a8a8a" stroke-width="0.9"/><path d="M14 5L5 14M14 9L9 14" stroke="#fff" stroke-width="0.7"/></svg>
</body></html>
